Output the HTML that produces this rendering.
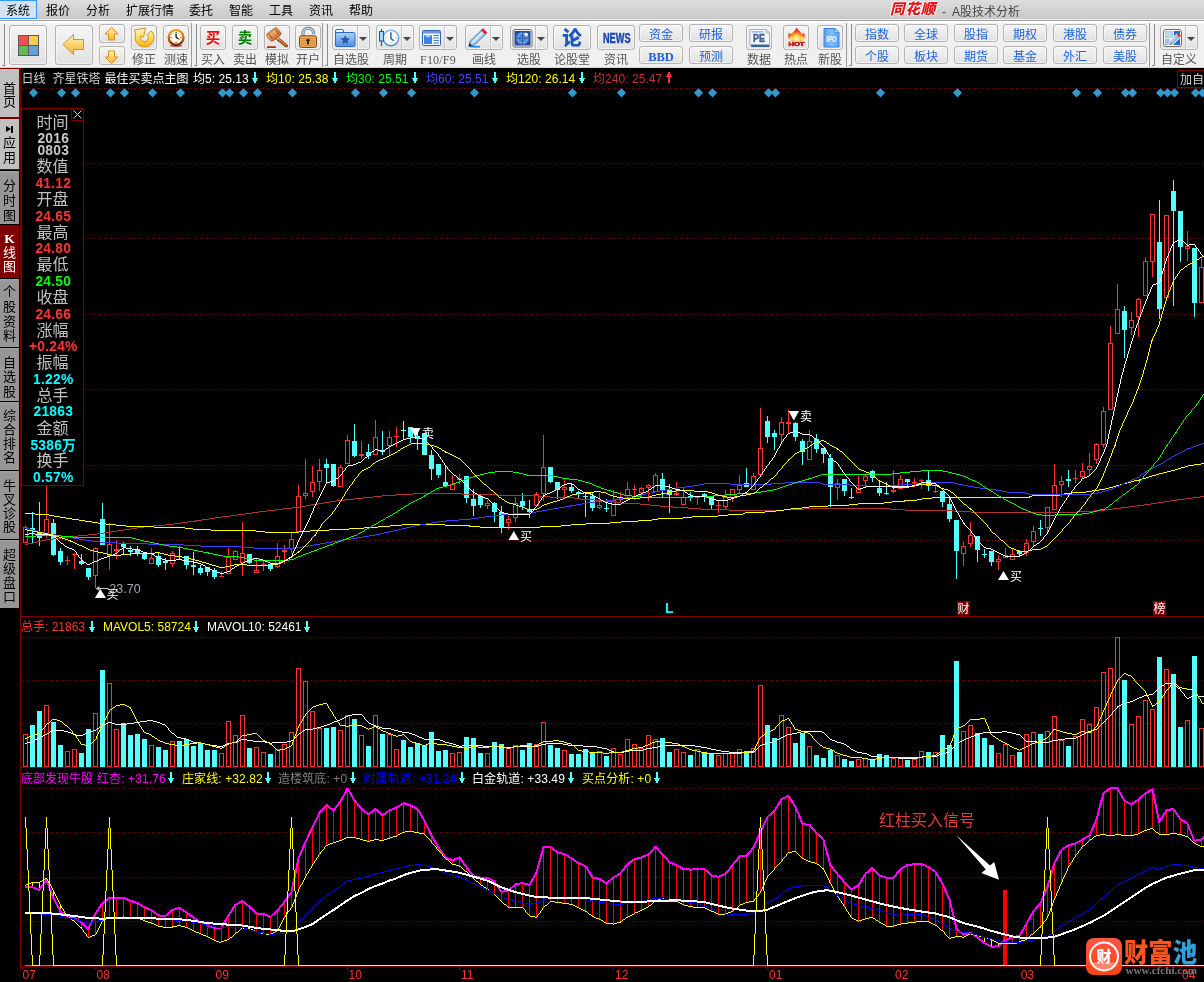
<!DOCTYPE html>
<html lang="zh-CN"><head><meta charset="utf-8"><title>同花顺 - A股技术分析</title>
<style>
*{box-sizing:border-box;margin:0;padding:0}
html,body{width:1204px;height:982px;overflow:hidden;background:#000}
body{position:relative;font-family:"Liberation Sans","Noto Sans CJK SC",sans-serif;font-size:12px;color:#000}
#chart{position:absolute;left:0;top:0;width:1204px;height:982px}
#chart,#side,#menu,#tb{will-change:transform}
#chart text{font-family:"Liberation Sans","Noto Sans CJK SC",sans-serif}
#side{position:absolute;left:0;top:68px;width:20px;height:914px;background:#000}
.tab{position:absolute;left:0;width:19px;font-size:13px;color:#000;text-align:center;word-break:break-all;overflow:hidden}
.rb{position:absolute;left:0;top:0;width:20px;height:102px;background:#800000}
.tl{background:#c0c0c0}
.td{background:linear-gradient(#a0a0a0,#969696 3px,#969696)}
.ta{background:#800000;color:#fff}
.ta b{font-family:'Liberation Serif',serif;font-weight:bold;font-size:13.5px}
.ap{position:absolute;left:6px;top:7px;width:7px;height:7px;background:linear-gradient(90deg,#000 0,#000 100%) right/2px 100% no-repeat}
.ap:before{content:"";position:absolute;left:0;top:0;border-left:5px solid #000;border-top:3.5px solid transparent;border-bottom:3.5px solid transparent}

#menu{position:absolute;left:0;top:0;width:1204px;height:21px;background:linear-gradient(#dedede 0,#c8c8c8 19px,#f0f0f0 19px,#f0f0f0 20px,#a0a0a0 20px,#a0a0a0 21px)}
#menu span{position:absolute;top:3.6px;height:14px;line-height:14px;font-size:12px;color:#000;white-space:nowrap}
#menu .hl{left:0;top:0;width:37px;height:19px;background:#d4e1f0;border:1px solid #3399ff;border-left:0}
#menu .logo{left:890px;top:1px;height:17px;line-height:17px;color:#e01414;font-weight:900;font-style:italic;font-size:14.5px;letter-spacing:0.9px;text-shadow:0 0 1px #fff,1px 0 0 #fff,-1px 0 0 #fff,0 1px 0 #fff,0 -1px 0 #fff}
#tb{position:absolute;left:0;top:21px;width:1204px;height:47px;background:linear-gradient(#fff 0,#fff 2px,#f0f0f0 2px,#f0f0f0 46px,#d4d4d4 46px);overflow:hidden}
#tb .b{position:absolute;border:1px solid #b4b4b4;border-radius:3px;background:linear-gradient(#f5f5f5,#e1e1e1);box-shadow:inset 0 0 0 1px rgba(255,255,255,.5)}
#tb .l{position:absolute;top:32px;height:14px;line-height:14px;font-size:12px;color:#555;text-align:center;white-space:nowrap}
#tb .t{position:absolute;width:44px;height:18px;border:1px solid #b4b4b4;border-radius:3px;background:linear-gradient(#f5f5f5,#e1e1e1);font-size:12px;line-height:20.5px;text-align:center;color:#1e64dc;box-shadow:inset 0 0 0 1px rgba(255,255,255,.5)}
#tb .sep{position:absolute;top:2px;width:1px;height:44px;background:#9a9a9a}
#tb .grip{position:absolute;top:3px;width:3px;height:42px;border-right:1px solid #8c8c8c;border-bottom:1px solid #8c8c8c}
#tb .dv{position:absolute;top:0;width:1px;height:100%;background:#c6c6c6;box-shadow:1px 0 0 rgba(255,255,255,.6)}
#tb .ar{position:absolute;top:10.6px;width:0;height:0;border-left:4.2px solid transparent;border-right:4.2px solid transparent;border-top:4.8px solid #464646}
#tb svg{position:absolute;left:-1px;top:0}
#tb .ch{position:absolute;left:0;top:0;width:100%;height:100%;text-align:center;font-weight:bold;font-size:17px;line-height:23px}

</style></head>
<body>
<svg id="chart" width="1204" height="982" viewBox="0 0 1204 982">
<g shape-rendering="crispEdges">
<line x1="23" y1="88.5" x2="1204" y2="88.5" stroke="#800000" stroke-width="1" stroke-dasharray="1 2"/>
<line x1="23" y1="163.5" x2="1204" y2="163.5" stroke="#800000" stroke-width="1" stroke-dasharray="1 2"/>
<line x1="23" y1="238.5" x2="1204" y2="238.5" stroke="#800000" stroke-width="1" stroke-dasharray="1 2"/>
<line x1="23" y1="314.5" x2="1204" y2="314.5" stroke="#800000" stroke-width="1" stroke-dasharray="1 2"/>
<line x1="23" y1="389.5" x2="1204" y2="389.5" stroke="#800000" stroke-width="1" stroke-dasharray="1 2"/>
<line x1="23" y1="465.5" x2="1204" y2="465.5" stroke="#800000" stroke-width="1" stroke-dasharray="1 2"/>
<line x1="23" y1="540.5" x2="1204" y2="540.5" stroke="#800000" stroke-width="1" stroke-dasharray="1 2"/>
<line x1="23" y1="637.5" x2="1204" y2="637.5" stroke="#800000" stroke-width="1" stroke-dasharray="1 2"/>
<line x1="23" y1="680.5" x2="1204" y2="680.5" stroke="#800000" stroke-width="1" stroke-dasharray="1 2"/>
<line x1="23" y1="723.5" x2="1204" y2="723.5" stroke="#800000" stroke-width="1" stroke-dasharray="1 2"/>
<line x1="23" y1="788.5" x2="1204" y2="788.5" stroke="#800000" stroke-width="1" stroke-dasharray="1 2"/>
<line x1="23" y1="832.5" x2="1204" y2="832.5" stroke="#800000" stroke-width="1" stroke-dasharray="1 2"/>
<line x1="23" y1="877.5" x2="1204" y2="877.5" stroke="#800000" stroke-width="1" stroke-dasharray="1 2"/>
<line x1="23" y1="921.5" x2="1204" y2="921.5" stroke="#800000" stroke-width="1" stroke-dasharray="1 2"/>
<rect x="20" y="68" width="1" height="902" fill="#800000"/>
<rect x="20" y="616" width="1184" height="1" fill="#800000"/>
<rect x="20" y="767" width="1184" height="1" fill="#800000"/>
<rect x="20" y="966" width="1184" height="1" fill="#800000"/>
</g>
<g fill="#3399cc">
<path d="M33.5 88.2l4.6 4.6l-4.6 4.6l-4.6-4.6z"/>
<path d="M61.5 88.2l4.6 4.6l-4.6 4.6l-4.6-4.6z"/>
<path d="M75.5 88.2l4.6 4.6l-4.6 4.6l-4.6-4.6z"/>
<path d="M110.5 88.2l4.6 4.6l-4.6 4.6l-4.6-4.6z"/>
<path d="M124.5 88.2l4.6 4.6l-4.6 4.6l-4.6-4.6z"/>
<path d="M152.5 88.2l4.6 4.6l-4.6 4.6l-4.6-4.6z"/>
<path d="M180.5 88.2l4.6 4.6l-4.6 4.6l-4.6-4.6z"/>
<path d="M222.5 88.2l4.6 4.6l-4.6 4.6l-4.6-4.6z"/>
<path d="M229.5 88.2l4.6 4.6l-4.6 4.6l-4.6-4.6z"/>
<path d="M243.5 88.2l4.6 4.6l-4.6 4.6l-4.6-4.6z"/>
<path d="M257.5 88.2l4.6 4.6l-4.6 4.6l-4.6-4.6z"/>
<path d="M292.5 88.2l4.6 4.6l-4.6 4.6l-4.6-4.6z"/>
<path d="M355.5 88.2l4.6 4.6l-4.6 4.6l-4.6-4.6z"/>
<path d="M383.5 88.2l4.6 4.6l-4.6 4.6l-4.6-4.6z"/>
<path d="M411.5 88.2l4.6 4.6l-4.6 4.6l-4.6-4.6z"/>
<path d="M474.5 88.2l4.6 4.6l-4.6 4.6l-4.6-4.6z"/>
<path d="M572.5 88.2l4.6 4.6l-4.6 4.6l-4.6-4.6z"/>
<path d="M621.5 88.2l4.6 4.6l-4.6 4.6l-4.6-4.6z"/>
<path d="M698.5 88.2l4.6 4.6l-4.6 4.6l-4.6-4.6z"/>
<path d="M712.5 88.2l4.6 4.6l-4.6 4.6l-4.6-4.6z"/>
<path d="M768.5 88.2l4.6 4.6l-4.6 4.6l-4.6-4.6z"/>
<path d="M775.5 88.2l4.6 4.6l-4.6 4.6l-4.6-4.6z"/>
<path d="M880.5 88.2l4.6 4.6l-4.6 4.6l-4.6-4.6z"/>
<path d="M957.5 88.2l4.6 4.6l-4.6 4.6l-4.6-4.6z"/>
<path d="M1076.5 88.2l4.6 4.6l-4.6 4.6l-4.6-4.6z"/>
<path d="M1097.5 88.2l4.6 4.6l-4.6 4.6l-4.6-4.6z"/>
<path d="M1125.5 88.2l4.6 4.6l-4.6 4.6l-4.6-4.6z"/>
<path d="M1132.5 88.2l4.6 4.6l-4.6 4.6l-4.6-4.6z"/>
<path d="M1160.5 88.2l4.6 4.6l-4.6 4.6l-4.6-4.6z"/>
<path d="M1167.5 88.2l4.6 4.6l-4.6 4.6l-4.6-4.6z"/>
<path d="M1174.5 88.2l4.6 4.6l-4.6 4.6l-4.6-4.6z"/>
<path d="M1195.5 88.2l4.6 4.6l-4.6 4.6l-4.6-4.6z"/>
<path d="M1202.5 88.2l4.6 4.6l-4.6 4.6l-4.6-4.6z"/>
</g>
<g shape-rendering="crispEdges">
<rect x="25" y="525" width="1" height="2" fill="#ff3232"/>
<rect x="23.5" y="527.5" width="4" height="15" fill="none" stroke="#ff3232" stroke-width="1"/>
<rect x="32" y="512" width="1" height="31" fill="#54ffff"/>
<rect x="30" y="528" width="5" height="2" fill="#54ffff"/>
<rect x="39" y="502" width="1" height="44" fill="#54ffff"/>
<rect x="37" y="532" width="5" height="6" fill="#54ffff"/>
<rect x="46" y="486" width="1" height="33" fill="#ff3232"/>
<rect x="46" y="536" width="1" height="2" fill="#ff3232"/>
<rect x="44.5" y="519.5" width="4" height="16" fill="none" stroke="#ff3232" stroke-width="1"/>
<rect x="53" y="519" width="1" height="37" fill="#54ffff"/>
<rect x="51" y="523" width="5" height="32" fill="#54ffff"/>
<rect x="60" y="548" width="1" height="17" fill="#54ffff"/>
<rect x="58" y="551" width="5" height="11" fill="#54ffff"/>
<rect x="67" y="556" width="1" height="9" fill="#ff3232"/>
<rect x="65" y="560" width="5" height="1" fill="#ff3232"/>
<rect x="74" y="553" width="1" height="16" fill="#ff3232"/>
<rect x="72" y="554" width="5" height="1" fill="#ff3232"/>
<rect x="81" y="554" width="1" height="11" fill="#54ffff"/>
<rect x="79" y="561" width="5" height="3" fill="#54ffff"/>
<rect x="88" y="568" width="1" height="12" fill="#54ffff"/>
<rect x="86" y="568" width="5" height="9" fill="#54ffff"/>
<rect x="95" y="547" width="1" height="1" fill="#ff3232"/>
<rect x="95" y="576" width="1" height="12" fill="#ff3232"/>
<rect x="93.5" y="548.5" width="4" height="27" fill="none" stroke="#ff3232" stroke-width="1"/>
<rect x="102" y="503" width="1" height="42" fill="#54ffff"/>
<rect x="100" y="519" width="5" height="26" fill="#54ffff"/>
<rect x="109" y="523" width="1" height="21" fill="#ff3232"/>
<rect x="109" y="556" width="1" height="14" fill="#ff3232"/>
<rect x="107.5" y="544.5" width="4" height="11" fill="none" stroke="#ff3232" stroke-width="1"/>
<rect x="116" y="540" width="1" height="19" fill="#ff3232"/>
<rect x="114" y="549" width="5" height="2" fill="#ff3232"/>
<rect x="123" y="542" width="1" height="13" fill="#54ffff"/>
<rect x="121" y="544" width="5" height="3" fill="#54ffff"/>
<rect x="130" y="546" width="1" height="10" fill="#54ffff"/>
<rect x="128" y="550" width="5" height="2" fill="#54ffff"/>
<rect x="137" y="546" width="1" height="10" fill="#54ffff"/>
<rect x="135" y="549" width="5" height="5" fill="#54ffff"/>
<rect x="144" y="554" width="1" height="6" fill="#54ffff"/>
<rect x="142" y="554" width="5" height="5" fill="#54ffff"/>
<rect x="151" y="548" width="1" height="10" fill="#ff3232"/>
<rect x="149.5" y="558.5" width="4" height="5" fill="none" stroke="#ff3232" stroke-width="1"/>
<rect x="158" y="553" width="1" height="14" fill="#54ffff"/>
<rect x="156" y="556" width="5" height="9" fill="#54ffff"/>
<rect x="165" y="558" width="1" height="12" fill="#54ffff"/>
<rect x="163" y="561" width="5" height="2" fill="#54ffff"/>
<rect x="172" y="551" width="1" height="2" fill="#ff3232"/>
<rect x="172" y="564" width="1" height="3" fill="#ff3232"/>
<rect x="170.5" y="553.5" width="4" height="10" fill="none" stroke="#ff3232" stroke-width="1"/>
<rect x="179" y="546" width="1" height="13" fill="#54ffff"/>
<rect x="177" y="556" width="5" height="1" fill="#54ffff"/>
<rect x="186" y="556" width="1" height="13" fill="#54ffff"/>
<rect x="184" y="556" width="5" height="9" fill="#54ffff"/>
<rect x="193" y="552" width="1" height="23" fill="#54ffff"/>
<rect x="191" y="565" width="5" height="2" fill="#54ffff"/>
<rect x="200" y="565" width="1" height="10" fill="#54ffff"/>
<rect x="198" y="568" width="5" height="5" fill="#54ffff"/>
<rect x="207" y="567" width="1" height="9" fill="#54ffff"/>
<rect x="205" y="567" width="5" height="5" fill="#54ffff"/>
<rect x="214" y="568" width="1" height="11" fill="#54ffff"/>
<rect x="212" y="570" width="5" height="7" fill="#54ffff"/>
<rect x="221" y="571" width="1" height="6" fill="#ff3232"/>
<rect x="219" y="576" width="5" height="1" fill="#ff3232"/>
<rect x="228" y="548" width="1" height="9" fill="#ff3232"/>
<rect x="226.5" y="557.5" width="4" height="16" fill="none" stroke="#ff3232" stroke-width="1"/>
<rect x="235" y="550" width="1" height="1" fill="#ff3232"/>
<rect x="233.5" y="551.5" width="4" height="8" fill="none" stroke="#ff3232" stroke-width="1"/>
<rect x="242" y="522" width="1" height="31" fill="#ff3232"/>
<rect x="242" y="563" width="1" height="13" fill="#ff3232"/>
<rect x="240.5" y="553.5" width="4" height="9" fill="none" stroke="#ff3232" stroke-width="1"/>
<rect x="249" y="554" width="1" height="10" fill="#54ffff"/>
<rect x="247" y="554" width="5" height="9" fill="#54ffff"/>
<rect x="256" y="559" width="1" height="11" fill="#ff3232"/>
<rect x="254.5" y="570.5" width="4" height="2" fill="none" stroke="#ff3232" stroke-width="1"/>
<rect x="263" y="561" width="1" height="10" fill="#ff3232"/>
<rect x="261" y="564" width="5" height="1" fill="#ff3232"/>
<rect x="270" y="563" width="1" height="8" fill="#54ffff"/>
<rect x="268" y="564" width="5" height="5" fill="#54ffff"/>
<rect x="277" y="543" width="1" height="13" fill="#ff3232"/>
<rect x="277" y="567" width="1" height="1" fill="#ff3232"/>
<rect x="275.5" y="556.5" width="4" height="10" fill="none" stroke="#ff3232" stroke-width="1"/>
<rect x="284" y="545" width="1" height="19" fill="#ff3232"/>
<rect x="282" y="550" width="5" height="2" fill="#ff3232"/>
<rect x="291" y="533" width="1" height="6" fill="#ff3232"/>
<rect x="291" y="549" width="1" height="4" fill="#ff3232"/>
<rect x="289.5" y="539.5" width="4" height="9" fill="none" stroke="#ff3232" stroke-width="1"/>
<rect x="298" y="485" width="1" height="11" fill="#ff3232"/>
<rect x="296.5" y="496.5" width="4" height="35" fill="none" stroke="#ff3232" stroke-width="1"/>
<rect x="305" y="459" width="1" height="34" fill="#ff3232"/>
<rect x="305" y="496" width="1" height="3" fill="#ff3232"/>
<rect x="303.5" y="493.5" width="4" height="2" fill="none" stroke="#ff3232" stroke-width="1"/>
<rect x="312" y="466" width="1" height="16" fill="#ff3232"/>
<rect x="312" y="492" width="1" height="5" fill="#ff3232"/>
<rect x="310.5" y="482.5" width="4" height="9" fill="none" stroke="#ff3232" stroke-width="1"/>
<rect x="319" y="459" width="1" height="11" fill="#ff3232"/>
<rect x="319" y="482" width="1" height="9" fill="#ff3232"/>
<rect x="317.5" y="470.5" width="4" height="11" fill="none" stroke="#ff3232" stroke-width="1"/>
<rect x="326" y="459" width="1" height="23" fill="#54ffff"/>
<rect x="324" y="464" width="5" height="4" fill="#54ffff"/>
<rect x="333" y="464" width="1" height="23" fill="#54ffff"/>
<rect x="331" y="464" width="5" height="22" fill="#54ffff"/>
<rect x="340" y="465" width="1" height="2" fill="#ff3232"/>
<rect x="338.5" y="467.5" width="4" height="19" fill="none" stroke="#ff3232" stroke-width="1"/>
<rect x="347" y="435" width="1" height="5" fill="#ff3232"/>
<rect x="345.5" y="440.5" width="4" height="23" fill="none" stroke="#ff3232" stroke-width="1"/>
<rect x="354" y="424" width="1" height="33" fill="#54ffff"/>
<rect x="352" y="441" width="5" height="15" fill="#54ffff"/>
<rect x="361" y="441" width="1" height="18" fill="#ff3232"/>
<rect x="359" y="454" width="5" height="2" fill="#ff3232"/>
<rect x="368" y="444" width="1" height="15" fill="#54ffff"/>
<rect x="366" y="452" width="5" height="4" fill="#54ffff"/>
<rect x="375" y="420" width="1" height="17" fill="#ff3232"/>
<rect x="373.5" y="437.5" width="4" height="17" fill="none" stroke="#ff3232" stroke-width="1"/>
<rect x="382" y="431" width="1" height="24" fill="#54ffff"/>
<rect x="380" y="450" width="5" height="2" fill="#54ffff"/>
<rect x="389" y="431" width="1" height="6" fill="#ff3232"/>
<rect x="389" y="446" width="1" height="9" fill="#ff3232"/>
<rect x="387.5" y="437.5" width="4" height="8" fill="none" stroke="#ff3232" stroke-width="1"/>
<rect x="396" y="427" width="1" height="20" fill="#ff3232"/>
<rect x="394" y="436" width="5" height="1" fill="#ff3232"/>
<rect x="403" y="421" width="1" height="19" fill="#54ffff"/>
<rect x="401" y="430" width="5" height="1" fill="#54ffff"/>
<rect x="410" y="427" width="1" height="16" fill="#54ffff"/>
<rect x="408" y="427" width="5" height="10" fill="#54ffff"/>
<rect x="417" y="429" width="1" height="21" fill="#54ffff"/>
<rect x="415" y="436" width="5" height="3" fill="#54ffff"/>
<rect x="424" y="433" width="1" height="22" fill="#54ffff"/>
<rect x="422" y="433" width="5" height="22" fill="#54ffff"/>
<rect x="431" y="450" width="1" height="30" fill="#54ffff"/>
<rect x="429" y="455" width="5" height="14" fill="#54ffff"/>
<rect x="438" y="464" width="1" height="14" fill="#54ffff"/>
<rect x="436" y="464" width="5" height="11" fill="#54ffff"/>
<rect x="445" y="466" width="1" height="21" fill="#54ffff"/>
<rect x="443" y="482" width="5" height="4" fill="#54ffff"/>
<rect x="452" y="475" width="1" height="9" fill="#ff3232"/>
<rect x="450.5" y="484.5" width="4" height="5" fill="none" stroke="#ff3232" stroke-width="1"/>
<rect x="459" y="474" width="1" height="10" fill="#ff3232"/>
<rect x="457" y="478" width="5" height="2" fill="#ff3232"/>
<rect x="466" y="476" width="1" height="27" fill="#54ffff"/>
<rect x="464" y="476" width="5" height="22" fill="#54ffff"/>
<rect x="473" y="489" width="1" height="27" fill="#54ffff"/>
<rect x="471" y="499" width="5" height="7" fill="#54ffff"/>
<rect x="480" y="495" width="1" height="13" fill="#54ffff"/>
<rect x="478" y="496" width="5" height="9" fill="#54ffff"/>
<rect x="487" y="500" width="1" height="3" fill="#ff3232"/>
<rect x="487" y="506" width="1" height="3" fill="#ff3232"/>
<rect x="485.5" y="503.5" width="4" height="2" fill="none" stroke="#ff3232" stroke-width="1"/>
<rect x="494" y="502" width="1" height="20" fill="#54ffff"/>
<rect x="492" y="503" width="5" height="9" fill="#54ffff"/>
<rect x="501" y="506" width="1" height="27" fill="#54ffff"/>
<rect x="499" y="512" width="5" height="16" fill="#54ffff"/>
<rect x="508" y="516" width="1" height="3" fill="#ff3232"/>
<rect x="508" y="523" width="1" height="7" fill="#ff3232"/>
<rect x="506.5" y="519.5" width="4" height="3" fill="none" stroke="#ff3232" stroke-width="1"/>
<rect x="515" y="497" width="1" height="6" fill="#ff3232"/>
<rect x="515" y="518" width="1" height="4" fill="#ff3232"/>
<rect x="513.5" y="503.5" width="4" height="14" fill="none" stroke="#ff3232" stroke-width="1"/>
<rect x="522" y="493" width="1" height="17" fill="#54ffff"/>
<rect x="520" y="501" width="5" height="5" fill="#54ffff"/>
<rect x="529" y="500" width="1" height="18" fill="#54ffff"/>
<rect x="527" y="510" width="5" height="2" fill="#54ffff"/>
<rect x="536" y="492" width="1" height="2" fill="#ff3232"/>
<rect x="534.5" y="494.5" width="4" height="11" fill="none" stroke="#ff3232" stroke-width="1"/>
<rect x="543" y="435" width="1" height="32" fill="#ff3232"/>
<rect x="543" y="494" width="1" height="7" fill="#ff3232"/>
<rect x="541.5" y="467.5" width="4" height="26" fill="none" stroke="#ff3232" stroke-width="1"/>
<rect x="550" y="467" width="1" height="16" fill="#54ffff"/>
<rect x="548" y="467" width="5" height="15" fill="#54ffff"/>
<rect x="557" y="482" width="1" height="17" fill="#54ffff"/>
<rect x="555" y="482" width="5" height="8" fill="#54ffff"/>
<rect x="564" y="479" width="1" height="8" fill="#ff3232"/>
<rect x="564" y="490" width="1" height="7" fill="#ff3232"/>
<rect x="562.5" y="487.5" width="4" height="2" fill="none" stroke="#ff3232" stroke-width="1"/>
<rect x="571" y="484" width="1" height="9" fill="#54ffff"/>
<rect x="569" y="487" width="5" height="4" fill="#54ffff"/>
<rect x="578" y="491" width="1" height="7" fill="#54ffff"/>
<rect x="576" y="492" width="5" height="2" fill="#54ffff"/>
<rect x="585" y="493" width="1" height="24" fill="#54ffff"/>
<rect x="583" y="496" width="5" height="1" fill="#54ffff"/>
<rect x="592" y="493" width="1" height="18" fill="#54ffff"/>
<rect x="590" y="496" width="5" height="12" fill="#54ffff"/>
<rect x="599" y="493" width="1" height="12" fill="#ff3232"/>
<rect x="599" y="508" width="1" height="1" fill="#ff3232"/>
<rect x="597.5" y="505.5" width="4" height="2" fill="none" stroke="#ff3232" stroke-width="1"/>
<rect x="606" y="499" width="1" height="13" fill="#54ffff"/>
<rect x="604" y="508" width="5" height="1" fill="#54ffff"/>
<rect x="613" y="490" width="1" height="10" fill="#ff3232"/>
<rect x="611.5" y="500.5" width="4" height="15" fill="none" stroke="#ff3232" stroke-width="1"/>
<rect x="620" y="492" width="1" height="11" fill="#ff3232"/>
<rect x="618" y="499" width="5" height="1" fill="#ff3232"/>
<rect x="627" y="482" width="1" height="7" fill="#ff3232"/>
<rect x="627" y="496" width="1" height="2" fill="#ff3232"/>
<rect x="625.5" y="489.5" width="4" height="6" fill="none" stroke="#ff3232" stroke-width="1"/>
<rect x="634" y="485" width="1" height="15" fill="#ff3232"/>
<rect x="632" y="489" width="5" height="1" fill="#ff3232"/>
<rect x="641" y="487" width="1" height="1" fill="#ff3232"/>
<rect x="641" y="493" width="1" height="4" fill="#ff3232"/>
<rect x="639.5" y="488.5" width="4" height="4" fill="none" stroke="#ff3232" stroke-width="1"/>
<rect x="648" y="484" width="1" height="1" fill="#ff3232"/>
<rect x="648" y="488" width="1" height="13" fill="#ff3232"/>
<rect x="646.5" y="485.5" width="4" height="2" fill="none" stroke="#ff3232" stroke-width="1"/>
<rect x="655" y="473" width="1" height="2" fill="#ff3232"/>
<rect x="653.5" y="475.5" width="4" height="16" fill="none" stroke="#ff3232" stroke-width="1"/>
<rect x="662" y="473" width="1" height="24" fill="#54ffff"/>
<rect x="660" y="479" width="5" height="11" fill="#54ffff"/>
<rect x="669" y="484" width="1" height="29" fill="#54ffff"/>
<rect x="667" y="489" width="5" height="6" fill="#54ffff"/>
<rect x="676" y="482" width="1" height="14" fill="#ff3232"/>
<rect x="674" y="493" width="5" height="2" fill="#ff3232"/>
<rect x="683" y="488" width="1" height="9" fill="#ff3232"/>
<rect x="681.5" y="497.5" width="4" height="7" fill="none" stroke="#ff3232" stroke-width="1"/>
<rect x="690" y="492" width="1" height="9" fill="#54ffff"/>
<rect x="688" y="496" width="5" height="1" fill="#54ffff"/>
<rect x="697" y="497" width="1" height="8" fill="#ff3232"/>
<rect x="695" y="497" width="5" height="1" fill="#ff3232"/>
<rect x="704" y="493" width="1" height="9" fill="#54ffff"/>
<rect x="702" y="494" width="5" height="2" fill="#54ffff"/>
<rect x="711" y="496" width="1" height="13" fill="#54ffff"/>
<rect x="709" y="496" width="5" height="9" fill="#54ffff"/>
<rect x="718" y="500" width="1" height="13" fill="#ff3232"/>
<rect x="716" y="505" width="5" height="1" fill="#ff3232"/>
<rect x="725" y="490" width="1" height="7" fill="#ff3232"/>
<rect x="725" y="507" width="1" height="2" fill="#ff3232"/>
<rect x="723.5" y="497.5" width="4" height="9" fill="none" stroke="#ff3232" stroke-width="1"/>
<rect x="732" y="498" width="1" height="4" fill="#ff3232"/>
<rect x="730.5" y="489.5" width="4" height="8" fill="none" stroke="#ff3232" stroke-width="1"/>
<rect x="739" y="475" width="1" height="10" fill="#ff3232"/>
<rect x="739" y="490" width="1" height="4" fill="#ff3232"/>
<rect x="737.5" y="485.5" width="4" height="4" fill="none" stroke="#ff3232" stroke-width="1"/>
<rect x="746" y="468" width="1" height="19" fill="#54ffff"/>
<rect x="744" y="483" width="5" height="4" fill="#54ffff"/>
<rect x="753" y="473" width="1" height="3" fill="#ff3232"/>
<rect x="751.5" y="476.5" width="4" height="13" fill="none" stroke="#ff3232" stroke-width="1"/>
<rect x="760" y="408" width="1" height="40" fill="#ff3232"/>
<rect x="758.5" y="448.5" width="4" height="26" fill="none" stroke="#ff3232" stroke-width="1"/>
<rect x="767" y="416" width="1" height="27" fill="#54ffff"/>
<rect x="765" y="421" width="5" height="16" fill="#54ffff"/>
<rect x="774" y="430" width="1" height="20" fill="#54ffff"/>
<rect x="772" y="433" width="5" height="4" fill="#54ffff"/>
<rect x="781" y="417" width="1" height="5" fill="#ff3232"/>
<rect x="781" y="435" width="1" height="7" fill="#ff3232"/>
<rect x="779.5" y="422.5" width="4" height="12" fill="none" stroke="#ff3232" stroke-width="1"/>
<rect x="788" y="410" width="1" height="24" fill="#ff3232"/>
<rect x="786" y="422" width="5" height="2" fill="#ff3232"/>
<rect x="795" y="422" width="1" height="19" fill="#54ffff"/>
<rect x="793" y="423" width="5" height="14" fill="#54ffff"/>
<rect x="802" y="439" width="1" height="26" fill="#54ffff"/>
<rect x="800" y="441" width="5" height="11" fill="#54ffff"/>
<rect x="809" y="430" width="1" height="11" fill="#ff3232"/>
<rect x="807.5" y="441.5" width="4" height="18" fill="none" stroke="#ff3232" stroke-width="1"/>
<rect x="816" y="434" width="1" height="19" fill="#54ffff"/>
<rect x="814" y="439" width="5" height="10" fill="#54ffff"/>
<rect x="823" y="448" width="1" height="15" fill="#54ffff"/>
<rect x="821" y="448" width="5" height="6" fill="#54ffff"/>
<rect x="830" y="454" width="1" height="53" fill="#54ffff"/>
<rect x="828" y="458" width="5" height="29" fill="#54ffff"/>
<rect x="837" y="479" width="1" height="4" fill="#ff3232"/>
<rect x="837" y="488" width="1" height="12" fill="#ff3232"/>
<rect x="835.5" y="483.5" width="4" height="4" fill="none" stroke="#ff3232" stroke-width="1"/>
<rect x="844" y="479" width="1" height="17" fill="#54ffff"/>
<rect x="842" y="479" width="5" height="12" fill="#54ffff"/>
<rect x="851" y="488" width="1" height="11" fill="#54ffff"/>
<rect x="849" y="497" width="5" height="1" fill="#54ffff"/>
<rect x="858" y="476" width="1" height="12" fill="#ff3232"/>
<rect x="856.5" y="488.5" width="4" height="4" fill="none" stroke="#ff3232" stroke-width="1"/>
<rect x="865" y="475" width="1" height="1" fill="#ff3232"/>
<rect x="865" y="481" width="1" height="6" fill="#ff3232"/>
<rect x="863.5" y="476.5" width="4" height="4" fill="none" stroke="#ff3232" stroke-width="1"/>
<rect x="872" y="470" width="1" height="12" fill="#54ffff"/>
<rect x="870" y="471" width="5" height="7" fill="#54ffff"/>
<rect x="879" y="482" width="1" height="14" fill="#54ffff"/>
<rect x="877" y="488" width="5" height="5" fill="#54ffff"/>
<rect x="886" y="482" width="1" height="13" fill="#54ffff"/>
<rect x="884" y="493" width="5" height="1" fill="#54ffff"/>
<rect x="893" y="470" width="1" height="23" fill="#ff3232"/>
<rect x="891" y="490" width="5" height="2" fill="#ff3232"/>
<rect x="900" y="475" width="1" height="4" fill="#ff3232"/>
<rect x="898.5" y="479.5" width="4" height="9" fill="none" stroke="#ff3232" stroke-width="1"/>
<rect x="907" y="479" width="1" height="7" fill="#54ffff"/>
<rect x="905" y="479" width="5" height="3" fill="#54ffff"/>
<rect x="914" y="478" width="1" height="9" fill="#ff3232"/>
<rect x="912" y="482" width="5" height="1" fill="#ff3232"/>
<rect x="921" y="479" width="1" height="10" fill="#ff3232"/>
<rect x="919" y="480" width="5" height="1" fill="#ff3232"/>
<rect x="928" y="471" width="1" height="20" fill="#54ffff"/>
<rect x="926" y="480" width="5" height="6" fill="#54ffff"/>
<rect x="935" y="483" width="1" height="10" fill="#ff3232"/>
<rect x="933" y="491" width="5" height="1" fill="#ff3232"/>
<rect x="942" y="491" width="1" height="16" fill="#54ffff"/>
<rect x="940" y="491" width="5" height="11" fill="#54ffff"/>
<rect x="949" y="498" width="1" height="24" fill="#54ffff"/>
<rect x="947" y="504" width="5" height="15" fill="#54ffff"/>
<rect x="956" y="520" width="1" height="59" fill="#54ffff"/>
<rect x="954" y="520" width="5" height="31" fill="#54ffff"/>
<rect x="963" y="542" width="1" height="4" fill="#ff3232"/>
<rect x="963" y="554" width="1" height="12" fill="#ff3232"/>
<rect x="961.5" y="546.5" width="4" height="7" fill="none" stroke="#ff3232" stroke-width="1"/>
<rect x="970" y="522" width="1" height="13" fill="#ff3232"/>
<rect x="970" y="544" width="1" height="3" fill="#ff3232"/>
<rect x="968.5" y="535.5" width="4" height="8" fill="none" stroke="#ff3232" stroke-width="1"/>
<rect x="977" y="536" width="1" height="26" fill="#54ffff"/>
<rect x="975" y="536" width="5" height="14" fill="#54ffff"/>
<rect x="984" y="549" width="1" height="9" fill="#54ffff"/>
<rect x="982" y="554" width="5" height="1" fill="#54ffff"/>
<rect x="991" y="551" width="1" height="15" fill="#54ffff"/>
<rect x="989" y="551" width="5" height="11" fill="#54ffff"/>
<rect x="998" y="555" width="1" height="4" fill="#ff3232"/>
<rect x="998" y="562" width="1" height="8" fill="#ff3232"/>
<rect x="996.5" y="559.5" width="4" height="2" fill="none" stroke="#ff3232" stroke-width="1"/>
<rect x="1005" y="548" width="1" height="7" fill="#ff3232"/>
<rect x="1003.5" y="555.5" width="4" height="2" fill="none" stroke="#ff3232" stroke-width="1"/>
<rect x="1012" y="549" width="1" height="5" fill="#ff3232"/>
<rect x="1010.5" y="554.5" width="4" height="5" fill="none" stroke="#ff3232" stroke-width="1"/>
<rect x="1019" y="550" width="1" height="6" fill="#54ffff"/>
<rect x="1017" y="551" width="5" height="3" fill="#54ffff"/>
<rect x="1026" y="539" width="1" height="4" fill="#ff3232"/>
<rect x="1026" y="553" width="1" height="3" fill="#ff3232"/>
<rect x="1024.5" y="543.5" width="4" height="9" fill="none" stroke="#ff3232" stroke-width="1"/>
<rect x="1033" y="526" width="1" height="5" fill="#ff3232"/>
<rect x="1033" y="542" width="1" height="5" fill="#ff3232"/>
<rect x="1031.5" y="531.5" width="4" height="10" fill="none" stroke="#ff3232" stroke-width="1"/>
<rect x="1040" y="520" width="1" height="16" fill="#54ffff"/>
<rect x="1038" y="528" width="5" height="1" fill="#54ffff"/>
<rect x="1047" y="528" width="1" height="4" fill="#ff3232"/>
<rect x="1045.5" y="507.5" width="4" height="20" fill="none" stroke="#ff3232" stroke-width="1"/>
<rect x="1054" y="464" width="1" height="21" fill="#ff3232"/>
<rect x="1052.5" y="485.5" width="4" height="24" fill="none" stroke="#ff3232" stroke-width="1"/>
<rect x="1061" y="476" width="1" height="5" fill="#ff3232"/>
<rect x="1061" y="485" width="1" height="12" fill="#ff3232"/>
<rect x="1059.5" y="481.5" width="4" height="3" fill="none" stroke="#ff3232" stroke-width="1"/>
<rect x="1068" y="470" width="1" height="17" fill="#54ffff"/>
<rect x="1066" y="479" width="5" height="2" fill="#54ffff"/>
<rect x="1075" y="470" width="1" height="13" fill="#ff3232"/>
<rect x="1073" y="478" width="5" height="1" fill="#ff3232"/>
<rect x="1082" y="463" width="1" height="8" fill="#ff3232"/>
<rect x="1082" y="477" width="1" height="2" fill="#ff3232"/>
<rect x="1080.5" y="471.5" width="4" height="5" fill="none" stroke="#ff3232" stroke-width="1"/>
<rect x="1089" y="453" width="1" height="13" fill="#ff3232"/>
<rect x="1089" y="470" width="1" height="5" fill="#ff3232"/>
<rect x="1087.5" y="466.5" width="4" height="3" fill="none" stroke="#ff3232" stroke-width="1"/>
<rect x="1096" y="443" width="1" height="1" fill="#ff3232"/>
<rect x="1096" y="460" width="1" height="4" fill="#ff3232"/>
<rect x="1094.5" y="444.5" width="4" height="15" fill="none" stroke="#ff3232" stroke-width="1"/>
<rect x="1103" y="407" width="1" height="4" fill="#ff3232"/>
<rect x="1103" y="445" width="1" height="3" fill="#ff3232"/>
<rect x="1101.5" y="411.5" width="4" height="33" fill="none" stroke="#ff3232" stroke-width="1"/>
<rect x="1110" y="326" width="1" height="17" fill="#ff3232"/>
<rect x="1108.5" y="343.5" width="4" height="66" fill="none" stroke="#ff3232" stroke-width="1"/>
<rect x="1117" y="284" width="1" height="25" fill="#ff3232"/>
<rect x="1115.5" y="309.5" width="4" height="24" fill="none" stroke="#ff3232" stroke-width="1"/>
<rect x="1124" y="306" width="1" height="52" fill="#54ffff"/>
<rect x="1122" y="311" width="5" height="19" fill="#54ffff"/>
<rect x="1131" y="312" width="1" height="8" fill="#ff3232"/>
<rect x="1131" y="328" width="1" height="7" fill="#ff3232"/>
<rect x="1129.5" y="320.5" width="4" height="7" fill="none" stroke="#ff3232" stroke-width="1"/>
<rect x="1138" y="298" width="1" height="1" fill="#ff3232"/>
<rect x="1138" y="317" width="1" height="20" fill="#ff3232"/>
<rect x="1136.5" y="299.5" width="4" height="17" fill="none" stroke="#ff3232" stroke-width="1"/>
<rect x="1145" y="257" width="1" height="4" fill="#ff3232"/>
<rect x="1143.5" y="261.5" width="4" height="34" fill="none" stroke="#ff3232" stroke-width="1"/>
<rect x="1152" y="262" width="1" height="15" fill="#ff3232"/>
<rect x="1150.5" y="214.5" width="4" height="47" fill="none" stroke="#ff3232" stroke-width="1"/>
<rect x="1159" y="200" width="1" height="119" fill="#54ffff"/>
<rect x="1157" y="242" width="5" height="67" fill="#54ffff"/>
<rect x="1166" y="298" width="1" height="2" fill="#ff3232"/>
<rect x="1164.5" y="215.5" width="4" height="82" fill="none" stroke="#ff3232" stroke-width="1"/>
<rect x="1173" y="180" width="1" height="126" fill="#54ffff"/>
<rect x="1171" y="191" width="5" height="20" fill="#54ffff"/>
<rect x="1180" y="211" width="1" height="51" fill="#54ffff"/>
<rect x="1178" y="211" width="5" height="36" fill="#54ffff"/>
<rect x="1187" y="231" width="1" height="15" fill="#ff3232"/>
<rect x="1187" y="249" width="1" height="12" fill="#ff3232"/>
<rect x="1185.5" y="246.5" width="4" height="2" fill="none" stroke="#ff3232" stroke-width="1"/>
<rect x="1194" y="248" width="1" height="69" fill="#54ffff"/>
<rect x="1192" y="248" width="5" height="55" fill="#54ffff"/>
<rect x="1201" y="258" width="1" height="9" fill="#ff3232"/>
<rect x="1199.5" y="267.5" width="4" height="35" fill="none" stroke="#ff3232" stroke-width="1"/>
</g>
<g stroke-linejoin="round" shape-rendering="crispEdges">
<path d="M25 544.5h3M28 543.5h5M33 542.5h4M37 541.5h4M41 540.5h5M46 539.5h7M53 538.5h8M61 537.5h7M68 536.5h10M78 535.5h10M88 534.5h9M97 533.5h7M104 532.5h7M111 531.5h6M117 530.5h7M124 529.5h7M131 528.5h6M137 527.5h7M144 526.5h9M153 525.5h12M165 524.5h9M174 523.5h7M181 522.5h7M188 521.5h8M195 520.5h7M202 519.5h7M209 518.5h6M215 517.5h7M222 516.5h8M230 515.5h7M237 514.5h8M245 513.5h7M252 512.5h7M259 511.5h8M267 510.5h8M275 509.5h8M283 508.5h9M292 507.5h8M300 506.5h6M306 505.5h5M311 504.5h7M318 503.5h6M324 502.5h6M330 501.5h6M336 500.5h9M345 499.5h9M354 498.5h9M363 497.5h10M373 496.5h9M382 495.5h14M396 494.5h17M413 493.5h49M462 494.5h36M498 495.5h41M539 496.5h11M550 497.5h24M574 498.5h6M580 499.5h14M594 500.5h10M604 501.5h9M613 502.5h8M621 503.5h19M640 504.5h10M650 505.5h10M660 506.5h13M673 507.5h15M688 508.5h13M701 509.5h28M729 510.5h55M784 509.5h20M804 508.5h86M890 509.5h15M905 510.5h49M954 511.5h17M971 512.5h106M1077 511.5h17M1094 510.5h11M1105 509.5h8M1113 508.5h8M1121 507.5h8M1129 506.5h8M1137 505.5h7M1144 504.5h7M1151 503.5h6M1157 502.5h7M1164 501.5h6M1170 500.5h7M1177 499.5h8M1185 498.5h8M1193 497.5h7M1200 496.5h4" fill="none" stroke="#b43232" stroke-width="1" shape-rendering="crispEdges"/>
<path d="M25 513.5h10M35 514.5h14M49 515.5h5M54 516.5h6M60 517.5h6M66 518.5h6M72 519.5h7M79 520.5h6M85 521.5h7M92 522.5h6M98 523.5h8M106 524.5h10M116 525.5h10M126 526.5h28M154 527.5h31M185 528.5h8M193 529.5h18M211 530.5h45M256 531.5h9M265 532.5h34M299 531.5h11M310 530.5h19M329 529.5h20M349 528.5h15M364 527.5h14M378 526.5h12M390 525.5h12M402 524.5h43M445 525.5h25M469 526.5h11M480 527.5h60M540 526.5h21M561 525.5h10M571 524.5h15M586 523.5h24M610 522.5h11M621 521.5h17M638 520.5h14M652 519.5h6M658 518.5h25M683 517.5h9M692 516.5h26M718 515.5h10M728 514.5h15M743 513.5h2M745 512.5h20M765 511.5h11M776 510.5h8M784 509.5h7M791 508.5h11M802 507.5h7M809 506.5h19M828 505.5h21M849 504.5h9M858 503.5h26M884 502.5h8M892 501.5h13M904 500.5h13M917 499.5h5M922 498.5h10M932 497.5h98M1029 496.5h3M1032 495.5h28M1060 494.5h4M1064 493.5h8M1072 492.5h14M1086 491.5h6M1092 490.5h7M1099 489.5h6M1105 488.5h4M1109 487.5h4M1113 486.5h3M1116 485.5h4M1120 484.5h3M1123 483.5h4M1127 482.5h4M1131 481.5h3M1134 480.5h6M1139 479.5h3M1142 478.5h4M1146 477.5h3M1149 476.5h3M1152 475.5h4M1156 474.5h3M1159 473.5h4M1163 472.5h4M1167 471.5h4M1171 470.5h4M1175 469.5h3M1178 468.5h3M1181 467.5h4M1185 466.5h3M1188 465.5h6M1194 464.5h7M1201 463.5h3" fill="none" stroke="#ffff00" stroke-width="1" shape-rendering="crispEdges"/>
<path d="M25 527.5h1M26 528.5h3M29 529.5h4M33 530.5h3M36 531.5h4M39 532.5h6M45 533.5h5M50 534.5h6M56 535.5h6M62 536.5h5M67 537.5h6M73 538.5h6M79 539.5h6M85 540.5h7M92 541.5h8M100 542.5h18M118 543.5h30M148 544.5h36M184 545.5h17M201 546.5h40M241 547.5h13M254 548.5h42M296 547.5h6M302 546.5h6M308 545.5h6M314 544.5h6M320 543.5h6M326 542.5h6M332 541.5h6M338 540.5h6M344 539.5h7M351 538.5h6M357 537.5h6M363 536.5h6M369 535.5h6M375 534.5h5M380 533.5h4M384 532.5h5M389 531.5h4M393 530.5h5M398 529.5h4M402 528.5h4M406 527.5h5M411 526.5h4M415 525.5h5M420 524.5h6M426 523.5h6M432 522.5h6M438 521.5h8M446 520.5h13M459 519.5h12M471 518.5h7M478 517.5h7M485 516.5h8M493 515.5h8M501 514.5h12M513 513.5h18M531 512.5h5M536 511.5h6M542 510.5h5M547 509.5h6M553 508.5h6M559 507.5h6M565 506.5h6M570 505.5h6M576 504.5h6M582 503.5h5M587 502.5h9M596 501.5h10M606 500.5h7M613 499.5h6M619 498.5h6M625 497.5h6M631 496.5h5M636 495.5h6M642 494.5h4M646 493.5h5M651 492.5h4M655 491.5h5M660 490.5h5M665 489.5h7M672 488.5h6M678 487.5h8M686 486.5h7M693 485.5h6M699 484.5h5M704 483.5h26M730 484.5h41M771 483.5h14M785 482.5h35M820 483.5h3M823 484.5h27M850 485.5h17M867 486.5h23M890 485.5h10M900 484.5h12M912 483.5h13M925 482.5h29M954 483.5h4M958 484.5h5M963 485.5h5M968 486.5h6M974 487.5h6M980 488.5h8M988 489.5h8M996 490.5h6M1002 491.5h5M1007 492.5h18M1025 493.5h4M1029 494.5h61M1090 493.5h8M1098 492.5h4M1102 491.5h3M1105 490.5h4M1109 489.5h3M1112 488.5h2M1114 487.5h2M1116 486.5h3M1119 485.5h2M1121 484.5h2M1123 483.5h2M1125 482.5h3M1128 481.5h2M1130 480.5h2M1132 479.5h3M1135 478.5h2M1137 477.5h2M1139 476.5h1M1140 475.5h1M1141 474.5h2M1143 473.5h1M1144 472.5h2M1145 471.5h2M1147 470.5h2M1149 469.5h2M1151 468.5h2M1153 467.5h2M1155 466.5h2M1157 465.5h2M1159 464.5h2M1161 463.5h2M1163 462.5h1M1164 461.5h2M1166 460.5h1M1167 459.5h2M1169 458.5h2M1171 457.5h1M1172 456.5h2M1174 455.5h2M1176 454.5h2M1178 453.5h2M1180 452.5h2M1182 451.5h2M1184 450.5h2M1186 449.5h2M1187 448.5h4M1191 447.5h2M1193 446.5h3M1196 445.5h3M1199 444.5h3M1202 443.5h2" fill="none" stroke="#3c3cff" stroke-width="1" shape-rendering="crispEdges"/>
<path d="M25 536.5h11M36 535.5h25M61 536.5h12M73 537.5h59M132 538.5h4M136 539.5h4M140 540.5h4M144 541.5h5M149 542.5h5M154 543.5h5M159 544.5h5M164 545.5h5M169 546.5h8M177 547.5h6M183 548.5h5M188 549.5h5M193 550.5h5M198 551.5h5M203 552.5h6M208 553.5h5M213 554.5h5M218 555.5h5M223 556.5h16M239 557.5h6M245 558.5h4M249 559.5h5M254 560.5h35M289 559.5h5M294 558.5h2M296 557.5h2M298 556.5h3M301 555.5h2M303 554.5h3M306 553.5h3M309 552.5h2M311 551.5h3M314 550.5h3M317 549.5h2M319 548.5h3M322 547.5h3M325 546.5h2M327 545.5h3M330 544.5h3M333 543.5h2M335 542.5h3M338 541.5h3M341 540.5h2M343 539.5h3M346 538.5h3M349 537.5h2M351 536.5h3M354 535.5h3M357 534.5h1M358 533.5h2M360 532.5h2M362 531.5h2M364 530.5h1M365 529.5h2M367 528.5h2M369 527.5h2M371 526.5h1M372 525.5h2M374 524.5h2M376 523.5h2M378 522.5h1M379 521.5h2M381 520.5h2M383 519.5h2M385 518.5h1M386 517.5h2M388 516.5h2M390 515.5h2M392 514.5h1M393 513.5h2M395 512.5h2M397 511.5h1M398 510.5h2M400 509.5h1M401 508.5h2M403 507.5h1M404 506.5h2M406 505.5h2M408 504.5h1M409 503.5h2M411 502.5h2M413 501.5h2M415 500.5h2M417 499.5h2M419 498.5h2M421 497.5h2M423 496.5h2M424 495.5h2M426 494.5h2M428 493.5h2M430 492.5h1M431 491.5h2M433 490.5h2M435 489.5h1M436 488.5h3M439 487.5h4M443 486.5h4M447 485.5h4M451 484.5h2M453 483.5h3M456 482.5h3M459 481.5h2M461 480.5h3M464 479.5h3M467 478.5h3M470 477.5h3M473 476.5h3M476 475.5h4M480 474.5h4M484 473.5h4M488 472.5h7M495 471.5h18M513 472.5h6M519 473.5h4M523 474.5h4M527 475.5h26M553 476.5h5M558 477.5h4M562 478.5h7M569 479.5h9M578 480.5h4M582 481.5h3M585 482.5h4M589 483.5h3M592 484.5h2M594 485.5h2M596 486.5h3M599 487.5h2M601 488.5h3M604 489.5h3M607 490.5h4M611 491.5h3M614 492.5h4M618 493.5h3M621 494.5h3M624 495.5h8M632 496.5h9M640 497.5h53M693 496.5h20M713 495.5h12M725 494.5h12M737 493.5h18M755 492.5h6M761 491.5h6M767 490.5h6M773 489.5h4M777 488.5h3M780 487.5h3M783 486.5h3M786 485.5h3M789 484.5h3M792 483.5h3M795 482.5h3M798 481.5h4M802 480.5h3M805 479.5h4M808 478.5h4M812 477.5h3M815 476.5h3M818 475.5h3M821 474.5h49M870 475.5h1M871 474.5h21M892 473.5h8M900 472.5h10M910 471.5h11M921 470.5h22M943 471.5h5M948 472.5h4M952 473.5h4M956 474.5h4M960 475.5h3M963 476.5h3M966 477.5h2M968 478.5h2M970 479.5h2M972 480.5h3M975 481.5h2M977 482.5h2M979 483.5h1M980 484.5h2M982 485.5h1M983 486.5h2M985 487.5h1M986 488.5h2M988 489.5h1M989 490.5h2M991 491.5h2M993 492.5h1M994 493.5h2M996 494.5h1M997 495.5h2M999 496.5h2M1001 497.5h2M1003 498.5h1M1004 499.5h2M1006 500.5h2M1008 501.5h2M1010 502.5h2M1012 503.5h2M1014 504.5h2M1016 505.5h1M1017 506.5h2M1019 507.5h2M1021 508.5h2M1023 509.5h3M1026 510.5h2M1028 511.5h3M1031 512.5h2M1033 513.5h3M1036 514.5h6M1042 515.5h13M1055 514.5h27M1082 513.5h7M1089 512.5h4M1093 511.5h4M1097 510.5h3M1100 509.5h5M1105 508.5h1M1106 507.5h2M1108 506.5h1M1109 505.5h1M1110 504.5h2M1112 503.5h1M1113 502.5h1M1114 501.5h1M1115 500.5h2M1117 499.5h1M1118 498.5h1M1119 497.5h2M1121 496.5h1M1122 495.5h1M1123 494.5h2M1125 493.5h1M1126 492.5h1M1127 491.5h2M1129 490.5h1M1130 489.5h1M1131 488.5h2M1133 487.5h1M1134 486.5h1M1135 485.5h2M1137 484.5h1M1138 483.5h1M1139.5 481v2M1140 480.5h1M1141 479.5h1M1142 478.5h1M1143.5 476v2M1144 475.5h1M1145 474.5h1M1146 473.5h1M1147 472.5h1M1148.5 470v2M1149 469.5h1M1150 468.5h1M1151 467.5h1M1152 466.5h1M1153.5 464v2M1154 463.5h1M1155 462.5h1M1156 461.5h1M1157 460.5h1M1158.5 458v2M1159 457.5h1M1160.5 455v2M1161 454.5h1M1162.5 452v2M1163.5 450v2M1164 449.5h1M1165.5 447v2M1166.5 445v2M1167.5 444v2M1168 443.5h1M1169.5 441v2M1170 440.5h1M1171.5 438v2M1172 437.5h1M1173.5 435v2M1174 434.5h1M1175.5 432v2M1176.5 431v2M1177.5 429v2M1178 428.5h1M1179.5 426v2M1180 425.5h1M1181.5 423v2M1182 422.5h1M1183.5 420v2M1184 419.5h1M1185.5 417v2M1186 416.5h1M1187 415.5h1M1188 414.5h1M1189 413.5h1M1190 412.5h1M1191.5 410v2M1192 409.5h1M1193 408.5h1M1194 407.5h1M1195 406.5h1M1196.5 404v2M1197 403.5h1M1198.5 401v2M1199 400.5h1M1200.5 398v2M1201 397.5h1M1202.5 395v2M1203 394.5h1" fill="none" stroke="#00ff00" stroke-width="1" shape-rendering="crispEdges"/>
<path d="M25 529.5h2M27 530.5h5M32 531.5h6M38 532.5h5M43 533.5h5M48 534.5h5M53 535.5h3M56 536.5h3M59 537.5h3M62 538.5h3M65 539.5h3M68 540.5h3M70 541.5h3M73 542.5h2M75 543.5h2M77 544.5h2M79 545.5h3M82 546.5h2M84 547.5h2M86 548.5h2M88 549.5h2M90 550.5h4M94 551.5h4M98 552.5h5M103 553.5h4M107 554.5h4M111 555.5h10M121 554.5h9M130 553.5h25M155 552.5h5M160 553.5h4M164 554.5h4M168 555.5h7M175 556.5h7M182 557.5h6M188 558.5h3M191 559.5h4M195 560.5h4M199 561.5h3M202 562.5h4M206 563.5h3M209 564.5h3M212 565.5h4M216 566.5h3M219 567.5h6M225 566.5h5M230 565.5h4M234 564.5h13M247 565.5h25M272 564.5h3M275 563.5h4M279 562.5h2M281 561.5h3M284 560.5h2M286 559.5h2M288 558.5h2M290 557.5h2M292 556.5h1M293 555.5h1M294 554.5h2M296 553.5h1M297 552.5h2M298 551.5h2M300 550.5h1M301 549.5h1M302 548.5h1M303 547.5h1M304 546.5h1M305 545.5h1M306 544.5h1M307 543.5h1M308 542.5h1M309 541.5h1M310 540.5h1M311.5 538v2M312 537.5h1M313 536.5h1M314 535.5h2M315 534.5h1M316.5 532v2M317 531.5h1M318.5 529v2M319 528.5h1M320.5 526v2M321.5 524v2M322 523.5h1M323 522.5h1M324 521.5h1M325 520.5h1M326 519.5h1M327 518.5h1M328 517.5h1M329 516.5h1M330 515.5h1M331 514.5h1M332.5 512v2M333 511.5h1M334 510.5h1M335.5 508v2M336 507.5h1M337.5 505v2M338 504.5h1M339.5 502v2M340 501.5h1M341.5 499v2M342.5 497v2M343 496.5h1M344.5 494v2M345.5 492v2M346 491.5h1M347.5 489v2M348 488.5h1M349.5 486v2M350 485.5h1M351 484.5h1M352.5 482v2M353 481.5h1M354.5 479v2M355 478.5h1M356 477.5h1M357 476.5h1M358.5 474v2M359 473.5h1M360 472.5h1M361 471.5h1M362 470.5h2M364 469.5h2M366 468.5h2M368 467.5h2M370 466.5h1M371 465.5h1M372 464.5h1M373 463.5h2M375 462.5h1M376 461.5h2M378 460.5h2M380 459.5h3M383 458.5h2M385 457.5h2M387 456.5h2M389 455.5h2M391 454.5h2M393 453.5h2M395 452.5h2M397 451.5h1M398 450.5h2M400 449.5h1M401 448.5h2M403 447.5h2M405 446.5h2M407 445.5h2M409 444.5h2M411 443.5h15M426 444.5h4M430 445.5h4M434 446.5h3M437 447.5h2M439 448.5h2M441 449.5h1M442 450.5h2M444 451.5h2M445 452.5h3M448 453.5h2M450 454.5h2M452 455.5h2M454 456.5h2M456 457.5h2M458 458.5h2M460 459.5h1M461 460.5h1M462 461.5h1M463 462.5h1M464 463.5h1M465 464.5h1M466 465.5h1M467 466.5h1M468 467.5h1M469 468.5h1M470 469.5h1M471.5 470v2M472 472.5h1M473 473.5h1M474 474.5h1M475 475.5h1M476 476.5h1M477 477.5h1M478 478.5h1M479 479.5h1M480 480.5h1M481 481.5h1M482 482.5h1M483 483.5h1M484 484.5h2M486 485.5h1M487 486.5h1M488 487.5h1M489 488.5h1M490 489.5h1M491 490.5h2M493 491.5h1M494 492.5h1M495 493.5h1M496 494.5h1M497 495.5h1M498 496.5h1M499 497.5h2M501 498.5h1M502 499.5h2M504 500.5h1M505 501.5h2M507 502.5h2M509 503.5h4M513 504.5h3M516 505.5h3M519 506.5h3M522 507.5h3M525 508.5h2M527 509.5h10M537 508.5h2M539 507.5h2M541 506.5h1M542 505.5h2M544 504.5h3M547 503.5h3M550 502.5h3M553 501.5h4M557 500.5h3M560 499.5h3M563 498.5h2M565 497.5h2M567 496.5h3M570 495.5h2M572 494.5h5M577 493.5h7M584 492.5h10M594 491.5h7M601 492.5h5M606 493.5h2M608 494.5h2M610 495.5h3M613 496.5h4M617 497.5h6M623 498.5h17M640 497.5h9M649 496.5h3M652 495.5h4M656 494.5h5M661 493.5h7M668 492.5h4M672 491.5h4M676 490.5h18M694 491.5h14M708 492.5h4M712 493.5h3M715 494.5h3M718 495.5h4M722 496.5h5M727 497.5h8M735 496.5h5M740 495.5h6M746 494.5h5M751 493.5h3M754 492.5h2M756 491.5h1M757 490.5h1M758 489.5h1M759 488.5h1M760 487.5h2M762 486.5h1M763 485.5h1M764 484.5h1M765 483.5h2M767 482.5h1M768 481.5h1M769 480.5h1M770 479.5h1M771 478.5h2M773 477.5h1M774 476.5h1M775 475.5h1M776 474.5h1M777.5 472v2M778 471.5h1M779 470.5h1M780 469.5h1M781 468.5h1M782.5 466v2M783 465.5h1M784 464.5h1M785 463.5h1M786 462.5h1M787 461.5h1M788.5 459v2M789 459.5h1M790 458.5h1M791 457.5h1M792 456.5h1M793 455.5h1M794 454.5h1M795 453.5h2M797 452.5h2M799 451.5h3M802 450.5h2M804 449.5h1M805 448.5h2M807 447.5h2M809 446.5h1M810 445.5h2M812 444.5h1M813 443.5h2M815 442.5h2M817 441.5h4M821 440.5h3M824 441.5h2M826 442.5h1M827 443.5h2M829 444.5h1M830 445.5h2M832 446.5h2M834 447.5h2M836 448.5h2M837 449.5h2M839 450.5h1M840 451.5h2M842 452.5h1M843 453.5h1M844 454.5h1M845 455.5h1M846 456.5h1M847 457.5h1M848 458.5h1M849 459.5h1M850 460.5h1M851 461.5h1M852 462.5h1M853 463.5h1M854 464.5h1M855 465.5h1M856 466.5h1M857 467.5h1M858 468.5h1M859 469.5h2M861 470.5h3M864 471.5h2M866 472.5h3M869 473.5h2M871 474.5h1M872 475.5h1M873 476.5h2M875 477.5h1M876 478.5h1M877 479.5h1M878 480.5h2M879 481.5h3M882 482.5h2M884 483.5h2M886 484.5h2M888 485.5h2M890 486.5h2M892 487.5h2M893 488.5h1M894 487.5h15M909 486.5h5M914 485.5h5M919 484.5h13M932 485.5h5M937 486.5h2M939 487.5h2M941 488.5h3M944 489.5h4M948 490.5h2M950 491.5h1M951 492.5h2M953 493.5h1M954 494.5h1M955 495.5h1M956 496.5h1M957 497.5h1M958 498.5h1M959 499.5h1M960 500.5h1M961 501.5h1M962 502.5h1M963 503.5h1M964 504.5h2M966 505.5h1M967 506.5h1M968 507.5h1M969 508.5h2M970 509.5h2M972 510.5h1M973 511.5h1M974 512.5h1M975 513.5h1M976 514.5h1M977 515.5h1M978 516.5h1M979 517.5h1M980 518.5h1M981 519.5h1M982 520.5h1M983 521.5h1M984 522.5h1M985 523.5h1M986 524.5h1M987.5 525v2M988 527.5h1M989 528.5h1M990.5 529v2M991 531.5h1M992 532.5h1M993 533.5h2M995 534.5h1M996 535.5h1M997 536.5h1M998 537.5h1M999 538.5h1M1000 539.5h1M1001 540.5h2M1003 541.5h1M1004 542.5h1M1005 543.5h1M1006 544.5h1M1007 545.5h1M1008 546.5h1M1009 547.5h2M1011 548.5h3M1014 549.5h2M1016 550.5h3M1019 551.5h9M1028 550.5h4M1032 549.5h9M1041 548.5h2M1043 547.5h2M1045 546.5h2M1047 545.5h1M1048 544.5h1M1049 543.5h1M1050 542.5h1M1051 541.5h1M1052 540.5h1M1053 539.5h1M1054 538.5h1M1055 537.5h1M1056 536.5h1M1057 535.5h1M1058 534.5h1M1059 533.5h1M1060 532.5h1M1061 531.5h1M1062.5 529v2M1063 528.5h1M1064 527.5h1M1065 526.5h1M1066 525.5h1M1067 524.5h1M1068 523.5h1M1069 522.5h1M1070.5 520v2M1071 519.5h1M1072 518.5h1M1073.5 516v2M1074 515.5h1M1075 514.5h1M1076 513.5h1M1077 512.5h1M1078 511.5h1M1079 510.5h1M1080 509.5h1M1081.5 507v2M1082 506.5h1M1083 505.5h1M1084 504.5h1M1085.5 502v2M1086 501.5h1M1087.5 499v2M1088 498.5h1M1089 497.5h1M1090.5 495v2M1091 494.5h1M1092 493.5h1M1093 492.5h1M1094.5 490v2M1095 489.5h1M1096 488.5h1M1097.5 486v2M1098.5 484v2M1099.5 482v2M1100.5 480v2M1101.5 478v2M1102.5 476v2M1103.5 473v3M1104.5 471v2M1105.5 468v3M1106.5 466v2M1107.5 463v3M1108.5 461v2M1109.5 458v3M1110.5 456v2M1111.5 453v3M1112.5 450v3M1113.5 448v2M1114.5 445v3M1115.5 442v4M1116.5 439v3M1117.5 436v3M1118.5 433v3M1119.5 430v3M1120.5 428v2M1121.5 426v2M1122.5 423v3M1123.5 421v2M1124.5 419v2M1125.5 417v2M1126.5 415v2M1127.5 412v3M1128.5 410v2M1129.5 408v2M1130.5 406v2M1131.5 404v2M1132.5 402v2M1133.5 399v3M1134.5 396v3M1135.5 394v2M1136.5 391v3M1137.5 389v2M1138.5 386v3M1139.5 383v3M1140.5 380v3M1141.5 377v3M1142.5 374v3M1143.5 370v4M1144.5 367v3M1145.5 363v4M1146.5 360v3M1147.5 356v4M1148.5 352v4M1149.5 348v4M1150.5 344v4M1151.5 340v4M1152.5 338v3M1153.5 336v2M1154.5 334v2M1155.5 332v2M1156.5 329v3M1157.5 327v2M1158.5 325v2M1159.5 321v4M1160.5 318v3M1161.5 314v4M1162.5 311v3M1163.5 307v4M1164.5 304v3M1165.5 301v3M1166.5 297v4M1167.5 295v2M1168.5 292v3M1169.5 290v2M1170.5 287v3M1171.5 285v2M1172.5 282v3M1173.5 280v2M1174 279.5h1M1175.5 277v2M1176 276.5h1M1177.5 274v2M1178 273.5h1M1179.5 271v2M1180 270.5h1M1181 269.5h2M1183 268.5h1M1184 267.5h1M1185 266.5h2M1187 265.5h1M1188 264.5h2M1190 263.5h2M1192 262.5h2M1194 261.5h2M1196 260.5h1M1197 259.5h2M1199 258.5h1M1200 257.5h2M1202 256.5h2" fill="none" stroke="#ffff00" stroke-width="1" shape-rendering="crispEdges"/>
<path d="M25 534.5h4M29 533.5h6M35 534.5h14M49 535.5h5M54 536.5h1M55 537.5h1M56 538.5h1M57 539.5h1M58 540.5h1M59 541.5h1M60 542.5h1M61 543.5h2M63 544.5h1M64 545.5h1M65 546.5h2M67 547.5h2M69 548.5h3M72 549.5h2M74 550.5h1M75 551.5h1M76.5 552v2M77 554.5h1M78.5 555v2M79 557.5h1M80 558.5h1M81.5 559v2M82 560.5h1M83 561.5h1M84 562.5h2M86 563.5h1M87 564.5h3M90 563.5h2M92 562.5h2M94 561.5h3M97 560.5h2M99 559.5h2M101 558.5h3M104 557.5h3M107 556.5h3M110 555.5h3M113 554.5h2M115 553.5h2M117 552.5h1M118 551.5h1M119 550.5h1M120 549.5h2M122 548.5h1M123 547.5h3M126 548.5h6M132 549.5h6M138 550.5h3M141 551.5h2M143 552.5h4M147 553.5h5M152 554.5h2M154 555.5h1M155 556.5h2M157 557.5h2M159 558.5h3M162 559.5h3M165 560.5h11M176 559.5h6M182 560.5h5M187 561.5h6M193 562.5h5M198 563.5h3M201 564.5h2M203 565.5h2M205 566.5h1M206 567.5h2M208 568.5h2M210 569.5h2M212 570.5h2M214 571.5h3M217 572.5h3M220 573.5h4M224 572.5h3M227 571.5h3M230 570.5h1M231 569.5h1M232 568.5h2M234 567.5h1M235 566.5h2M237 565.5h2M239 564.5h2M241 563.5h2M243 562.5h2M245 561.5h2M247 560.5h2M249 559.5h4M253 558.5h6M259 559.5h4M263 560.5h2M265 561.5h3M268 562.5h2M270 563.5h5M275 564.5h3M278 563.5h3M281 562.5h2M283 561.5h2M285 560.5h2M287 559.5h1M288 558.5h1M289 557.5h2M291 556.5h1M292.5 553v3M293.5 551v2M294.5 549v2M295.5 547v2M296.5 545v2M297.5 542v3M298.5 540v2M299.5 538v2M300.5 536v2M301.5 534v2M302.5 532v2M303.5 530v2M304.5 528v2M305.5 526v2M306.5 524v2M307.5 522v2M308.5 520v2M309.5 518v2M310.5 515v3M311.5 513v2M312.5 511v2M313.5 508v3M314.5 506v2M315.5 504v2M316.5 502v2M317.5 500v2M318.5 498v2M319.5 496v2M320.5 494v2M321.5 492v2M322.5 490v2M323.5 488v2M324.5 486v2M325.5 484v2M326.5 482v2M327 482.5h3M330 481.5h4M334 480.5h1M335 479.5h1M336 478.5h2M338 477.5h1M339 476.5h1M340 475.5h1M341 474.5h1M342.5 472v2M343 471.5h1M344 470.5h1M345.5 468v2M346 467.5h1M347 466.5h1M348 465.5h5M353 464.5h3M356 463.5h2M358 462.5h3M361 461.5h1M362 460.5h1M363 459.5h1M364 458.5h1M365 457.5h2M367 456.5h1M368 455.5h1M369 454.5h1M370 453.5h1M371 452.5h1M372 451.5h2M374 450.5h1M375 449.5h3M378 450.5h3M381 451.5h2M383 450.5h2M385 449.5h1M386 448.5h2M388 447.5h1M389 446.5h2M391 445.5h2M393 444.5h2M395 443.5h2M397 442.5h2M399 441.5h2M401 440.5h2M403 439.5h3M406 438.5h4M410 437.5h9M419 438.5h3M422 439.5h3M425 440.5h1M426 441.5h1M427 442.5h1M428 443.5h1M429 444.5h1M430 445.5h1M431 446.5h1M432.5 447v2M433 449.5h1M434 450.5h1M435 451.5h1M436 452.5h1M437 453.5h1M438.5 454v2M439 456.5h1M440.5 457v2M441 459.5h1M442.5 460v2M443 462.5h1M444.5 463v2M445 465.5h1M446 466.5h1M447.5 467v2M448 469.5h1M449 470.5h1M450 471.5h1M451 472.5h1M452 473.5h1M453 474.5h1M454 475.5h2M456 476.5h1M457 477.5h1M458 478.5h1M459 479.5h2M461 480.5h1M462 481.5h1M463 482.5h1M464 483.5h1M465 484.5h2M467 485.5h1M468.5 486v2M469 488.5h1M470 489.5h1M471 490.5h1M472 491.5h1M473 492.5h2M475 493.5h2M477 494.5h1M478 495.5h2M480 496.5h3M483 497.5h2M485 498.5h3M488 499.5h1M489 500.5h1M490 501.5h1M491 502.5h1M492 503.5h1M493 504.5h1M494 505.5h1M495 506.5h1M496 507.5h1M497 508.5h1M498 509.5h1M499 510.5h1M500 511.5h1M501 512.5h3M504 513.5h4M508 514.5h22M530 513.5h1M531 512.5h1M532 511.5h1M533.5 509v2M534 508.5h1M535 507.5h1M536 506.5h1M537.5 504v2M538 503.5h1M539.5 501v2M540 500.5h1M541.5 498v2M542 497.5h1M543.5 495v2M544 495.5h1M545 494.5h2M547 493.5h3M550 492.5h2M552 491.5h2M554 490.5h2M556 489.5h2M558 488.5h2M560 487.5h1M561 486.5h1M562 485.5h2M564 484.5h3M567 483.5h5M572 484.5h2M574 485.5h1M575 486.5h1M576 487.5h1M577 488.5h1M578 489.5h2M580 490.5h2M582 491.5h1M583 492.5h2M585 493.5h6M590 494.5h2M592 495.5h2M594 496.5h2M596 497.5h2M598 498.5h2M600 499.5h1M601 500.5h2M603 501.5h2M605 502.5h3M608 503.5h4M612 504.5h9M621 503.5h1M622 502.5h2M624 501.5h2M626 500.5h2M628 499.5h2M630 498.5h2M632 497.5h1M633 496.5h3M636 495.5h2M638 494.5h3M641 493.5h2M643 492.5h3M646 491.5h2M648 490.5h1M649 489.5h2M651 488.5h1M652 487.5h2M654 486.5h1M655 485.5h10M665 486.5h4M669 487.5h3M672 488.5h3M675 489.5h5M680 490.5h4M684 491.5h1M685 492.5h2M687 493.5h1M688 494.5h2M690 495.5h3M693 496.5h13M706 497.5h3M709 498.5h3M712 499.5h4M716 500.5h12M728 499.5h3M731 498.5h3M734 497.5h3M737 496.5h3M740 495.5h2M742 494.5h1M743 493.5h2M745 492.5h2M747 491.5h1M748 490.5h1M749 489.5h1M750 488.5h1M751 487.5h1M752 486.5h1M753 485.5h1M754.5 483v2M755 482.5h1M756 481.5h1M757.5 479v2M758 478.5h1M759 477.5h1M760.5 475v2M761 474.5h1M762.5 472v2M763 471.5h1M764.5 469v2M765 468.5h1M766.5 466v2M767 465.5h1M768 464.5h1M769.5 462v2M770 461.5h1M771 460.5h1M772.5 458v2M773 457.5h1M774.5 455v2M775.5 453v2M776.5 451v2M777.5 449v2M778 448.5h1M779.5 446v2M780.5 444v2M781.5 442v2M782 441.5h1M783.5 439v2M784 438.5h1M785 437.5h1M786.5 435v2M787 434.5h1M788 433.5h2M790 432.5h3M793 431.5h4M797 432.5h3M800 433.5h2M802 434.5h8M810 435.5h2M812 436.5h1M813 437.5h1M814 438.5h2M816 439.5h1M817 440.5h1M818 441.5h1M819 442.5h1M820 443.5h1M821 444.5h1M822 445.5h1M823 446.5h1M824.5 447v2M825 449.5h1M826.5 450v2M827.5 452v2M828 454.5h1M829.5 455v2M830 457.5h1M831 458.5h1M832 459.5h1M833 460.5h1M834 461.5h2M836 462.5h1M837 463.5h1M838.5 464v2M839 466.5h1M840.5 467v2M841 469.5h1M842.5 470v2M843 472.5h1M844 473.5h1M845.5 474v2M846 476.5h1M847 477.5h1M848 478.5h1M849.5 479v2M850 481.5h1M851 482.5h1M852 483.5h1M853 484.5h1M854 485.5h1M855 486.5h1M856 487.5h1M857 488.5h1M858 489.5h2M860 488.5h3M863 487.5h3M866 486.5h46M912 485.5h4M916 484.5h3M919 483.5h2M921 482.5h10M931 483.5h5M936 484.5h1M937 485.5h2M939 486.5h1M940 487.5h1M941 488.5h1M942 489.5h1M943 490.5h1M944 491.5h1M945 492.5h1M946 493.5h1M947 494.5h1M948 495.5h1M949.5 496v2M950.5 498v2M951.5 500v2M952.5 502v2M953.5 504v2M954.5 506v2M955.5 508v2M956.5 510v2M957 512.5h1M958.5 513v2M959.5 515v2M960.5 517v2M961 519.5h1M962.5 520v2M963.5 522v2M964.5 523v2M965 525.5h1M966 526.5h1M967 527.5h1M968 528.5h1M969 529.5h1M970 530.5h1M971.5 531v2M972 533.5h1M973 534.5h1M974.5 535v2M975 537.5h1M976 538.5h1M977.5 539v2M978 541.5h1M979 542.5h1M980 543.5h1M981 544.5h1M982 545.5h1M983 546.5h1M984 547.5h2M986 548.5h5M991 549.5h2M993 550.5h2M995 551.5h2M997 552.5h2M999 553.5h2M1001 554.5h2M1003 555.5h2M1005 556.5h15M1020 555.5h2M1022 554.5h2M1024 553.5h2M1026 552.5h1M1027 551.5h1M1028 550.5h2M1030 549.5h1M1031 548.5h1M1032 547.5h1M1033 546.5h1M1034 545.5h2M1036 544.5h1M1037 543.5h2M1039 542.5h1M1040 541.5h1M1041 540.5h1M1042 539.5h1M1043.5 537v2M1044 536.5h1M1045 535.5h1M1046 534.5h1M1047.5 532v2M1048.5 530v2M1049.5 528v2M1050.5 526v2M1051.5 524v2M1052.5 522v2M1053.5 520v2M1054.5 518v2M1055.5 516v2M1056 515.5h1M1057.5 513v2M1058.5 511v2M1059.5 509v2M1060.5 507v2M1061 506.5h1M1062.5 504v2M1063 503.5h1M1064.5 501v2M1065 500.5h1M1066.5 498v2M1067 497.5h1M1068.5 495v2M1069 494.5h1M1070 493.5h1M1071.5 491v2M1072 490.5h1M1073 489.5h1M1074.5 487v2M1075 486.5h1M1076 485.5h1M1077 484.5h1M1078 483.5h1M1079 482.5h1M1080 481.5h1M1081.5 479v2M1082 478.5h2M1084 477.5h3M1087 476.5h2M1089 475.5h1M1090 474.5h1M1091 473.5h1M1092 472.5h1M1093 471.5h1M1094 470.5h1M1095 469.5h1M1096.5 467v2M1097.5 465v2M1098.5 463v2M1099.5 461v2M1100.5 458v3M1101.5 456v2M1102.5 454v2M1103.5 452v2M1104.5 449v3M1105.5 447v2M1106.5 444v3M1107.5 439v5M1108.5 434v5M1109.5 430v4M1110.5 425v5M1111.5 420v5M1112.5 416v4M1113.5 411v5M1114.5 407v4M1115.5 402v5M1116.5 397v5M1117.5 393v4M1118.5 388v5M1119.5 384v4M1120.5 379v5M1121.5 375v4M1122.5 372v3M1123.5 368v4M1124.5 364v4M1125.5 361v3M1126.5 358v3M1127.5 354v4M1128.5 351v3M1129.5 348v3M1130.5 344v4M1131.5 341v3M1132.5 338v3M1133.5 335v3M1134.5 331v4M1135.5 328v3M1136.5 325v3M1137.5 323v2M1138.5 320v3M1139.5 317v3M1140.5 314v3M1141.5 312v2M1142.5 309v3M1143.5 306v3M1144.5 304v2M1145.5 301v3M1146.5 299v2M1147.5 296v3M1148.5 294v2M1149.5 292v2M1150.5 289v3M1151.5 287v2M1152.5 285v2M1153 284.5h3M1156 283.5h2M1158 282.5h2M1159 281.5h1M1160.5 278v3M1161.5 274v4M1162.5 271v3M1163.5 268v3M1164.5 264v4M1165.5 261v3M1166.5 258v3M1167.5 256v2M1168.5 253v3M1169.5 251v2M1170.5 248v3M1171.5 246v2M1172.5 244v2M1173.5 242v2M1174 242.5h1M1175 241.5h2M1177 240.5h2M1179 239.5h2M1181 240.5h2M1183 241.5h1M1184 242.5h1M1185 243.5h1M1186 244.5h1M1187 245.5h2M1189 244.5h6M1195.5 245v2M1196 247.5h1M1197 248.5h1M1198.5 249v2M1199 251.5h1M1200.5 252v2M1201 254.5h1M1202 255.5h1M1203 256.5h1" fill="none" stroke="#ffffff" stroke-width="1" shape-rendering="crispEdges"/>
</g>
<path d="M95.500 588.500l4-2.500v2h9v1h-9v2z" fill="#c0c0c0"/>
<text x="109.3" y="593" fill="#a4acb6" font-size="12.5" >23.70</text>
<path d="M100.4 589L106 598L94.8 598z" fill="#fff"/>
<text x="106.5" y="599.3" fill="#fff" font-size="12" >买</text>
<path d="M410.5 428L420.5 428L415.5 437.5z" fill="#fff"/>
<text x="422" y="438" fill="#fff" font-size="12" >卖</text>
<path d="M513.8 531L519 540L508.5 540z" fill="#fff"/>
<text x="520" y="541" fill="#fff" font-size="12" >买</text>
<path d="M788.5 411L799 411L793.8 420.5z" fill="#fff"/>
<text x="800" y="421" fill="#fff" font-size="12" >卖</text>
<path d="M1003.5 571L1009 580L998 580z" fill="#fff"/>
<text x="1010" y="581" fill="#fff" font-size="12" >买</text>
<text x="665" y="613.3" fill="#00ffff" font-size="14" font-weight="bold">L</text>
<rect x="957" y="601" width="13" height="14" fill="#800000"/>
<text x="957.5" y="612.5" fill="#fff" font-size="12" >财</text>
<rect x="1153" y="601" width="13" height="14" fill="#800000"/>
<text x="1153.5" y="612.5" fill="#fff" font-size="12" >榜</text>
<g shape-rendering="crispEdges">
<rect x="23.5" y="734.5" width="4" height="32" fill="none" stroke="#ff3232" stroke-width="1"/>
<rect x="30" y="725" width="5" height="42" fill="#54ffff"/>
<rect x="37" y="711" width="5" height="56" fill="#54ffff"/>
<rect x="44.5" y="705.5" width="4" height="61" fill="none" stroke="#ff3232" stroke-width="1"/>
<rect x="51" y="722" width="5" height="45" fill="#54ffff"/>
<rect x="58" y="745" width="5" height="22" fill="#54ffff"/>
<rect x="65.5" y="751.5" width="4" height="15" fill="none" stroke="#ff3232" stroke-width="1"/>
<rect x="72.5" y="749.5" width="4" height="17" fill="none" stroke="#ff3232" stroke-width="1"/>
<rect x="79" y="753" width="5" height="14" fill="#54ffff"/>
<rect x="86" y="729" width="5" height="38" fill="#54ffff"/>
<rect x="93.5" y="713.5" width="4" height="53" fill="none" stroke="#ff3232" stroke-width="1"/>
<rect x="100" y="670" width="5" height="97" fill="#54ffff"/>
<rect x="107.5" y="683.5" width="4" height="83" fill="none" stroke="#ff3232" stroke-width="1"/>
<rect x="114.5" y="729.5" width="4" height="37" fill="none" stroke="#ff3232" stroke-width="1"/>
<rect x="121" y="723" width="5" height="44" fill="#54ffff"/>
<rect x="128" y="735" width="5" height="32" fill="#54ffff"/>
<rect x="135" y="734" width="5" height="33" fill="#54ffff"/>
<rect x="142" y="739" width="5" height="28" fill="#54ffff"/>
<rect x="149.5" y="745.5" width="4" height="21" fill="none" stroke="#ff3232" stroke-width="1"/>
<rect x="156" y="747" width="5" height="20" fill="#54ffff"/>
<rect x="163" y="750" width="5" height="17" fill="#54ffff"/>
<rect x="170.5" y="741.5" width="4" height="25" fill="none" stroke="#ff3232" stroke-width="1"/>
<rect x="177" y="741" width="5" height="26" fill="#54ffff"/>
<rect x="184" y="739" width="5" height="28" fill="#54ffff"/>
<rect x="191" y="746" width="5" height="21" fill="#54ffff"/>
<rect x="198" y="743" width="5" height="24" fill="#54ffff"/>
<rect x="205" y="750" width="5" height="17" fill="#54ffff"/>
<rect x="212" y="750" width="5" height="17" fill="#54ffff"/>
<rect x="219.5" y="753.5" width="4" height="13" fill="none" stroke="#ff3232" stroke-width="1"/>
<rect x="226.5" y="721.5" width="4" height="45" fill="none" stroke="#ff3232" stroke-width="1"/>
<rect x="233.5" y="735.5" width="4" height="31" fill="none" stroke="#ff3232" stroke-width="1"/>
<rect x="240.5" y="715.5" width="4" height="51" fill="none" stroke="#ff3232" stroke-width="1"/>
<rect x="247" y="748" width="5" height="19" fill="#54ffff"/>
<rect x="254.5" y="747.5" width="4" height="19" fill="none" stroke="#ff3232" stroke-width="1"/>
<rect x="261.5" y="752.5" width="4" height="14" fill="none" stroke="#ff3232" stroke-width="1"/>
<rect x="268" y="754" width="5" height="13" fill="#54ffff"/>
<rect x="275.5" y="749.5" width="4" height="17" fill="none" stroke="#ff3232" stroke-width="1"/>
<rect x="282.5" y="744.5" width="4" height="22" fill="none" stroke="#ff3232" stroke-width="1"/>
<rect x="289.5" y="732.5" width="4" height="34" fill="none" stroke="#ff3232" stroke-width="1"/>
<rect x="296.5" y="668.5" width="4" height="98" fill="none" stroke="#ff3232" stroke-width="1"/>
<rect x="303.5" y="681.5" width="4" height="85" fill="none" stroke="#ff3232" stroke-width="1"/>
<rect x="310.5" y="711.5" width="4" height="55" fill="none" stroke="#ff3232" stroke-width="1"/>
<rect x="317.5" y="728.5" width="4" height="38" fill="none" stroke="#ff3232" stroke-width="1"/>
<rect x="324" y="728" width="5" height="39" fill="#54ffff"/>
<rect x="331" y="727" width="5" height="40" fill="#54ffff"/>
<rect x="338.5" y="730.5" width="4" height="36" fill="none" stroke="#ff3232" stroke-width="1"/>
<rect x="345.5" y="715.5" width="4" height="51" fill="none" stroke="#ff3232" stroke-width="1"/>
<rect x="352" y="719" width="5" height="48" fill="#54ffff"/>
<rect x="359.5" y="735.5" width="4" height="31" fill="none" stroke="#ff3232" stroke-width="1"/>
<rect x="366" y="746" width="5" height="21" fill="#54ffff"/>
<rect x="373.5" y="715.5" width="4" height="51" fill="none" stroke="#ff3232" stroke-width="1"/>
<rect x="380" y="734" width="5" height="33" fill="#54ffff"/>
<rect x="387.5" y="734.5" width="4" height="32" fill="none" stroke="#ff3232" stroke-width="1"/>
<rect x="394.5" y="749.5" width="4" height="17" fill="none" stroke="#ff3232" stroke-width="1"/>
<rect x="401" y="740" width="5" height="27" fill="#54ffff"/>
<rect x="408" y="747" width="5" height="20" fill="#54ffff"/>
<rect x="415" y="743" width="5" height="24" fill="#54ffff"/>
<rect x="422" y="745" width="5" height="22" fill="#54ffff"/>
<rect x="429" y="732" width="5" height="35" fill="#54ffff"/>
<rect x="436" y="751" width="5" height="16" fill="#54ffff"/>
<rect x="443" y="750" width="5" height="17" fill="#54ffff"/>
<rect x="450.5" y="753.5" width="4" height="13" fill="none" stroke="#ff3232" stroke-width="1"/>
<rect x="457.5" y="752.5" width="4" height="14" fill="none" stroke="#ff3232" stroke-width="1"/>
<rect x="464" y="737" width="5" height="30" fill="#54ffff"/>
<rect x="471" y="738" width="5" height="29" fill="#54ffff"/>
<rect x="478" y="753" width="5" height="14" fill="#54ffff"/>
<rect x="485.5" y="753.5" width="4" height="13" fill="none" stroke="#ff3232" stroke-width="1"/>
<rect x="492" y="742" width="5" height="25" fill="#54ffff"/>
<rect x="499" y="744" width="5" height="23" fill="#54ffff"/>
<rect x="506.5" y="748.5" width="4" height="18" fill="none" stroke="#ff3232" stroke-width="1"/>
<rect x="513.5" y="745.5" width="4" height="21" fill="none" stroke="#ff3232" stroke-width="1"/>
<rect x="520" y="750" width="5" height="17" fill="#54ffff"/>
<rect x="527" y="743" width="5" height="24" fill="#54ffff"/>
<rect x="534.5" y="744.5" width="4" height="22" fill="none" stroke="#ff3232" stroke-width="1"/>
<rect x="541.5" y="722.5" width="4" height="44" fill="none" stroke="#ff3232" stroke-width="1"/>
<rect x="548" y="745" width="5" height="22" fill="#54ffff"/>
<rect x="555" y="748" width="5" height="19" fill="#54ffff"/>
<rect x="562.5" y="750.5" width="4" height="16" fill="none" stroke="#ff3232" stroke-width="1"/>
<rect x="569" y="754" width="5" height="13" fill="#54ffff"/>
<rect x="576" y="754" width="5" height="13" fill="#54ffff"/>
<rect x="583" y="749" width="5" height="18" fill="#54ffff"/>
<rect x="590" y="752" width="5" height="15" fill="#54ffff"/>
<rect x="597.5" y="751.5" width="4" height="15" fill="none" stroke="#ff3232" stroke-width="1"/>
<rect x="604" y="756" width="5" height="11" fill="#54ffff"/>
<rect x="611.5" y="748.5" width="4" height="18" fill="none" stroke="#ff3232" stroke-width="1"/>
<rect x="618.5" y="754.5" width="4" height="12" fill="none" stroke="#ff3232" stroke-width="1"/>
<rect x="625.5" y="739.5" width="4" height="27" fill="none" stroke="#ff3232" stroke-width="1"/>
<rect x="632.5" y="744.5" width="4" height="22" fill="none" stroke="#ff3232" stroke-width="1"/>
<rect x="639.5" y="748.5" width="4" height="18" fill="none" stroke="#ff3232" stroke-width="1"/>
<rect x="646.5" y="735.5" width="4" height="31" fill="none" stroke="#ff3232" stroke-width="1"/>
<rect x="653.5" y="739.5" width="4" height="27" fill="none" stroke="#ff3232" stroke-width="1"/>
<rect x="660" y="738" width="5" height="29" fill="#54ffff"/>
<rect x="667" y="752" width="5" height="15" fill="#54ffff"/>
<rect x="674.5" y="749.5" width="4" height="17" fill="none" stroke="#ff3232" stroke-width="1"/>
<rect x="681.5" y="752.5" width="4" height="14" fill="none" stroke="#ff3232" stroke-width="1"/>
<rect x="688" y="755" width="5" height="12" fill="#54ffff"/>
<rect x="695.5" y="749.5" width="4" height="17" fill="none" stroke="#ff3232" stroke-width="1"/>
<rect x="702" y="753" width="5" height="14" fill="#54ffff"/>
<rect x="709" y="754" width="5" height="13" fill="#54ffff"/>
<rect x="716.5" y="755.5" width="4" height="11" fill="none" stroke="#ff3232" stroke-width="1"/>
<rect x="723.5" y="753.5" width="4" height="13" fill="none" stroke="#ff3232" stroke-width="1"/>
<rect x="730.5" y="753.5" width="4" height="13" fill="none" stroke="#ff3232" stroke-width="1"/>
<rect x="737.5" y="749.5" width="4" height="17" fill="none" stroke="#ff3232" stroke-width="1"/>
<rect x="744" y="751" width="5" height="16" fill="#54ffff"/>
<rect x="751.5" y="748.5" width="4" height="18" fill="none" stroke="#ff3232" stroke-width="1"/>
<rect x="758.5" y="685.5" width="4" height="81" fill="none" stroke="#ff3232" stroke-width="1"/>
<rect x="765" y="725" width="5" height="42" fill="#54ffff"/>
<rect x="772" y="738" width="5" height="29" fill="#54ffff"/>
<rect x="779.5" y="715.5" width="4" height="51" fill="none" stroke="#ff3232" stroke-width="1"/>
<rect x="786.5" y="727.5" width="4" height="39" fill="none" stroke="#ff3232" stroke-width="1"/>
<rect x="793" y="743" width="5" height="24" fill="#54ffff"/>
<rect x="800" y="733" width="5" height="34" fill="#54ffff"/>
<rect x="807.5" y="746.5" width="4" height="20" fill="none" stroke="#ff3232" stroke-width="1"/>
<rect x="814" y="755" width="5" height="12" fill="#54ffff"/>
<rect x="821" y="758" width="5" height="9" fill="#54ffff"/>
<rect x="828" y="750" width="5" height="17" fill="#54ffff"/>
<rect x="835.5" y="755.5" width="4" height="11" fill="none" stroke="#ff3232" stroke-width="1"/>
<rect x="842" y="759" width="5" height="8" fill="#54ffff"/>
<rect x="849" y="761" width="5" height="6" fill="#54ffff"/>
<rect x="856.5" y="759.5" width="4" height="7" fill="none" stroke="#ff3232" stroke-width="1"/>
<rect x="863.5" y="758.5" width="4" height="8" fill="none" stroke="#ff3232" stroke-width="1"/>
<rect x="870" y="759" width="5" height="8" fill="#54ffff"/>
<rect x="877" y="754" width="5" height="13" fill="#54ffff"/>
<rect x="884" y="755" width="5" height="12" fill="#54ffff"/>
<rect x="891.5" y="758.5" width="4" height="8" fill="none" stroke="#ff3232" stroke-width="1"/>
<rect x="898.5" y="758.5" width="4" height="8" fill="none" stroke="#ff3232" stroke-width="1"/>
<rect x="905" y="760" width="5" height="7" fill="#54ffff"/>
<rect x="912.5" y="759.5" width="4" height="7" fill="none" stroke="#ff3232" stroke-width="1"/>
<rect x="919.5" y="751.5" width="4" height="15" fill="none" stroke="#ff3232" stroke-width="1"/>
<rect x="926" y="752" width="5" height="15" fill="#54ffff"/>
<rect x="933.5" y="752.5" width="4" height="14" fill="none" stroke="#ff3232" stroke-width="1"/>
<rect x="940" y="735" width="5" height="32" fill="#54ffff"/>
<rect x="947" y="745" width="5" height="22" fill="#54ffff"/>
<rect x="954" y="661" width="5" height="106" fill="#54ffff"/>
<rect x="961.5" y="731.5" width="4" height="35" fill="none" stroke="#ff3232" stroke-width="1"/>
<rect x="968.5" y="725.5" width="4" height="41" fill="none" stroke="#ff3232" stroke-width="1"/>
<rect x="975" y="733" width="5" height="34" fill="#54ffff"/>
<rect x="982" y="738" width="5" height="29" fill="#54ffff"/>
<rect x="989" y="745" width="5" height="22" fill="#54ffff"/>
<rect x="996.5" y="753.5" width="4" height="13" fill="none" stroke="#ff3232" stroke-width="1"/>
<rect x="1003.5" y="744.5" width="4" height="22" fill="none" stroke="#ff3232" stroke-width="1"/>
<rect x="1010.5" y="755.5" width="4" height="11" fill="none" stroke="#ff3232" stroke-width="1"/>
<rect x="1017" y="752" width="5" height="15" fill="#54ffff"/>
<rect x="1024.5" y="734.5" width="4" height="32" fill="none" stroke="#ff3232" stroke-width="1"/>
<rect x="1031.5" y="732.5" width="4" height="34" fill="none" stroke="#ff3232" stroke-width="1"/>
<rect x="1038" y="734" width="5" height="33" fill="#54ffff"/>
<rect x="1045.5" y="731.5" width="4" height="35" fill="none" stroke="#ff3232" stroke-width="1"/>
<rect x="1052.5" y="716.5" width="4" height="50" fill="none" stroke="#ff3232" stroke-width="1"/>
<rect x="1059.5" y="740.5" width="4" height="26" fill="none" stroke="#ff3232" stroke-width="1"/>
<rect x="1066" y="746" width="5" height="21" fill="#54ffff"/>
<rect x="1073.5" y="736.5" width="4" height="30" fill="none" stroke="#ff3232" stroke-width="1"/>
<rect x="1080.5" y="719.5" width="4" height="47" fill="none" stroke="#ff3232" stroke-width="1"/>
<rect x="1087.5" y="724.5" width="4" height="42" fill="none" stroke="#ff3232" stroke-width="1"/>
<rect x="1094.5" y="707.5" width="4" height="59" fill="none" stroke="#ff3232" stroke-width="1"/>
<rect x="1101.5" y="672.5" width="4" height="94" fill="none" stroke="#ff3232" stroke-width="1"/>
<rect x="1108.5" y="668.5" width="4" height="98" fill="none" stroke="#ff3232" stroke-width="1"/>
<rect x="1115.5" y="637.5" width="4" height="129" fill="none" stroke="#ff3232" stroke-width="1"/>
<rect x="1122" y="680" width="5" height="87" fill="#54ffff"/>
<rect x="1129.5" y="724.5" width="4" height="42" fill="none" stroke="#ff3232" stroke-width="1"/>
<rect x="1136.5" y="716.5" width="4" height="50" fill="none" stroke="#ff3232" stroke-width="1"/>
<rect x="1143.5" y="700.5" width="4" height="66" fill="none" stroke="#ff3232" stroke-width="1"/>
<rect x="1150.5" y="709.5" width="4" height="57" fill="none" stroke="#ff3232" stroke-width="1"/>
<rect x="1157" y="657" width="5" height="110" fill="#54ffff"/>
<rect x="1164.5" y="669.5" width="4" height="97" fill="none" stroke="#ff3232" stroke-width="1"/>
<rect x="1171" y="674" width="5" height="93" fill="#54ffff"/>
<rect x="1178" y="727" width="5" height="40" fill="#54ffff"/>
<rect x="1185.5" y="720.5" width="4" height="46" fill="none" stroke="#ff3232" stroke-width="1"/>
<rect x="1192" y="656" width="5" height="111" fill="#54ffff"/>
<rect x="1199.5" y="728.5" width="4" height="38" fill="none" stroke="#ff3232" stroke-width="1"/>
</g>
<path d="M25 743.5h2M27 742.5h4M31 741.5h3M34 740.5h1M35 739.5h2M37 738.5h2M39 737.5h2M41 736.5h2M43 735.5h2M45 734.5h2M47 733.5h2M49 732.5h1M50 731.5h2M52 730.5h12M64 731.5h4M68 732.5h3M71 733.5h2M73 734.5h3M76 735.5h7M83 734.5h2M85 733.5h2M87 732.5h2M89 731.5h4M93 730.5h3M96 729.5h1M97 728.5h2M99 727.5h1M100 726.5h2M102 725.5h1M103 724.5h3M106 723.5h2M108 722.5h4M112 723.5h3M115 724.5h12M127 723.5h7M134 722.5h6M140 721.5h7M147 720.5h6M153 721.5h4M157 722.5h3M160 723.5h2M162 724.5h3M165 725.5h1M166 726.5h1M167 727.5h1M168.5 728v2M169 730.5h1M170 731.5h1M171 732.5h1M172 733.5h2M174 734.5h1M175 735.5h1M176 736.5h1M177 737.5h4M181 738.5h5M186 739.5h3M189 740.5h2M191 741.5h2M193 742.5h8M201 743.5h4M205 744.5h5M210 745.5h7M217 746.5h6M223 745.5h2M225 744.5h2M227 743.5h5M232 742.5h5M237 741.5h2M239 740.5h2M241 739.5h6M247 740.5h6M253 741.5h12M265 742.5h5M270 743.5h2M272 742.5h15M287 741.5h4M291 740.5h2M293 739.5h1M294 738.5h1M295 737.5h1M296 736.5h1M297 735.5h1M298 734.5h1M299 733.5h2M301 732.5h1M302 731.5h1M303 730.5h2M305 729.5h8M313 728.5h4M317 727.5h4M321 726.5h3M324 725.5h3M327 724.5h3M330 723.5h2M332 722.5h2M334 721.5h3M337 720.5h3M340 719.5h2M342 718.5h2M344 717.5h2M346 716.5h2M348 715.5h4M352 714.5h10M362 715.5h1M363 716.5h1M364.5 717v2M365 719.5h1M366 720.5h1M367 721.5h1M368 722.5h1M369 723.5h2M371 724.5h2M373 725.5h3M375 726.5h4M379 727.5h3M382 728.5h9M391 729.5h3M394 730.5h4M398 731.5h4M402 732.5h7M409 733.5h3M412 734.5h3M415 735.5h2M417 736.5h2M419 737.5h3M422 738.5h2M424 739.5h16M440 740.5h3M443 741.5h2M445 742.5h4M449 743.5h4M453 744.5h3M456 745.5h3M459 746.5h3M462 745.5h21M483 746.5h16M499 747.5h14M513 746.5h25M538 745.5h3M541 744.5h5M546 743.5h17M563 744.5h5M568 745.5h15M583 746.5h14M597 747.5h5M602 748.5h5M607 749.5h2M609 750.5h2M611 751.5h3M614 752.5h10M624 751.5h5M629 750.5h14M643 749.5h3M646 748.5h6M652 747.5h6M658 746.5h3M661 745.5h34M695 746.5h6M701 747.5h6M707 748.5h4M711 749.5h5M716 750.5h5M721 751.5h8M729 752.5h25M754 751.5h1M755 750.5h1M756 749.5h1M757 748.5h1M758 747.5h1M759 746.5h1M760 745.5h2M762 744.5h3M765 743.5h4M769 742.5h4M773 741.5h3M776 740.5h1M777 739.5h2M779 738.5h2M781 737.5h2M783 736.5h2M785 735.5h2M787 734.5h5M792 733.5h5M797 732.5h4M801 731.5h21M822 732.5h2M824 733.5h1M825 734.5h1M826 735.5h1M827 736.5h1M828 737.5h1M829 738.5h1M830 739.5h2M832 740.5h3M835 741.5h2M837 742.5h4M841 743.5h3M844 744.5h2M846 745.5h1M847 746.5h2M849 747.5h1M850 748.5h1M851 749.5h2M853 750.5h2M855 751.5h2M857 752.5h5M862 753.5h5M867 754.5h2M869 755.5h2M871 756.5h7M878 757.5h20M898 758.5h20M918 757.5h4M922 756.5h15M937 755.5h2M939 754.5h2M941 753.5h5M946 752.5h4M950 751.5h1M951.5 749v2M952 748.5h1M953 747.5h1M954.5 745v2M955 744.5h1M956 743.5h1M957 742.5h3M960 741.5h2M962 740.5h2M964 739.5h2M966 738.5h3M969 737.5h2M971 736.5h3M974 735.5h2M976 734.5h3M979 733.5h4M983 732.5h19M1002 731.5h5M1007 732.5h5M1012 733.5h4M1016 734.5h4M1020 735.5h1M1021 736.5h1M1022 737.5h1M1023 738.5h1M1024 739.5h1M1025 740.5h1M1026 741.5h11M1037 742.5h12M1049 741.5h3M1052 740.5h6M1058 739.5h7M1065 738.5h11M1076 737.5h2M1078 736.5h2M1080 735.5h2M1082 734.5h2M1084 733.5h2M1086 732.5h2M1088 731.5h3M1091 730.5h3M1094 729.5h3M1097 728.5h1M1098 727.5h1M1099 726.5h1M1100 725.5h1M1101 724.5h1M1102 723.5h1M1103 722.5h1M1104 721.5h1M1105 720.5h1M1106 719.5h1M1107 718.5h1M1108 717.5h1M1109 716.5h1M1110 715.5h1M1111 714.5h1M1112.5 712v2M1113 711.5h1M1114 710.5h1M1115 709.5h1M1116 708.5h1M1117.5 706v2M1118 706.5h1M1119 705.5h2M1121 704.5h2M1123 703.5h3M1126 702.5h4M1130 701.5h3M1133 700.5h2M1135 699.5h2M1137 698.5h2M1139 697.5h3M1142 696.5h2M1144 695.5h5M1149 694.5h4M1153 693.5h1M1154 692.5h1M1155 691.5h1M1156 690.5h1M1157 689.5h1M1158 688.5h1M1159 687.5h1M1160 686.5h2M1162 685.5h2M1164 684.5h1M1165 683.5h9M1174 684.5h1M1175 685.5h1M1176 686.5h1M1177 687.5h1M1178 688.5h2M1180.5 689v2M1181 691.5h1M1182 692.5h1M1183 693.5h1M1184.5 694v2M1185 696.5h1M1186 697.5h1M1187 698.5h2M1189 697.5h2M1191 696.5h2M1193 695.5h5M1198 696.5h6" fill="none" stroke="#ffffff" stroke-width="1" shape-rendering="crispEdges"/>
<path d="M25 738.5h2M27 737.5h2M29 736.5h2M31 735.5h3M34 734.5h3M37 733.5h3M40 732.5h1M41.5 730v2M42 729.5h1M43 728.5h1M44 727.5h1M45.5 725v2M46 724.5h1M47 723.5h2M49 722.5h1M50 721.5h1M51 720.5h1M52 719.5h5M57 720.5h3M60 721.5h2M62 722.5h1M63 723.5h1M64 724.5h1M65 725.5h2M67 726.5h1M68 727.5h1M69 728.5h1M70 729.5h1M71 730.5h1M72.5 731v2M73 733.5h1M74 734.5h1M75 735.5h1M76.5 736v2M77 738.5h1M78.5 739v2M79 741.5h1M80.5 742v2M81 744.5h4M85 745.5h4M89 744.5h1M90 743.5h2M92 742.5h1M93 741.5h1M94 740.5h1M95 739.5h1M96.5 736v3M97.5 734v2M98.5 732v2M99.5 730v2M100.5 728v2M101.5 726v2M102.5 724v2M103.5 722v2M104.5 720v2M105.5 718v2M106.5 716v2M107.5 714v2M108.5 712v2M109.5 710v2M110 709.5h2M112 708.5h1M113 707.5h2M115 706.5h1M116 705.5h4M120 704.5h5M125 705.5h2M127 706.5h2M129 707.5h2M130 708.5h1M131.5 709v2M132.5 711v2M133.5 713v2M134.5 715v2M135.5 717v2M136.5 719v2M137.5 721v2M138 723.5h1M139.5 724v2M140 726.5h1M141.5 727v2M142 729.5h1M143.5 730v2M144 732.5h2M146 733.5h3M149 734.5h2M151 735.5h1M152 736.5h2M154 737.5h1M155 738.5h2M157 739.5h1M158 740.5h2M160 741.5h3M163 742.5h2M165 743.5h4M169 744.5h6M175 745.5h9M184 744.5h6M190 743.5h7M197 742.5h4M201 743.5h4M205 744.5h4M209 745.5h3M212 746.5h4M216 747.5h4M220 748.5h2M222 747.5h2M224 746.5h1M225 745.5h2M227 744.5h2M229 743.5h3M232 742.5h4M236 741.5h1M237 740.5h1M238 739.5h1M239 738.5h1M240 737.5h1M241 736.5h1M242 735.5h5M247 734.5h5M252 733.5h5M257 734.5h1M258 735.5h1M259 736.5h1M260 737.5h1M261 738.5h1M262 739.5h1M263 740.5h2M265 741.5h2M267 742.5h2M269 743.5h1M270 744.5h2M272 745.5h1M273 746.5h1M274 747.5h1M275 748.5h1M276 749.5h1M277 750.5h3M280 749.5h5M285 748.5h2M287 747.5h2M289 746.5h2M291 745.5h1M292.5 742v3M293.5 739v3M294.5 736v3M295.5 734v2M296.5 731v3M297.5 728v3M298.5 726v2M299.5 724v2M300 723.5h1M301.5 721v2M302.5 719v2M303.5 717v2M304 716.5h1M305.5 714v2M306 713.5h1M307 712.5h1M308 711.5h1M309 710.5h1M310 709.5h1M311 708.5h1M312 707.5h1M313 706.5h3M316 705.5h3M319 704.5h4M323 703.5h4M327.5 704v2M328.5 706v2M329 708.5h1M330.5 709v2M331 711.5h1M332.5 712v2M333.5 714v2M334 716.5h1M335.5 717v2M336 719.5h1M337.5 720v2M338 722.5h1M339.5 723v2M340 725.5h6M346 726.5h3M349 725.5h4M353 724.5h4M357 725.5h5M362 726.5h2M364 727.5h2M366 728.5h2M368 729.5h1M369 728.5h3M372 727.5h2M374 726.5h2M376 727.5h2M378 728.5h2M380 729.5h1M381 730.5h2M383 731.5h3M386 732.5h2M388 733.5h3M391 734.5h2M393 735.5h3M396 736.5h2M398 735.5h4M402 734.5h2M404 735.5h1M405 736.5h1M406 737.5h1M407 738.5h1M408 739.5h1M409 740.5h1M410 741.5h2M412 742.5h4M416 743.5h3M419 744.5h3M422 745.5h4M426 744.5h2M428 743.5h3M431 742.5h2M433 743.5h4M437 744.5h10M447 745.5h5M452 746.5h5M457 747.5h7M464 748.5h4M468 747.5h4M472 746.5h6M478 747.5h11M489 746.5h4M493 745.5h4M497 746.5h6M503 747.5h4M507 748.5h3M510 747.5h4M514 746.5h6M520 745.5h9M529 746.5h5M534 745.5h4M538 744.5h1M539 743.5h2M541 742.5h2M543 741.5h10M553 740.5h6M559 741.5h5M564 742.5h3M567 743.5h4M571 744.5h1M572 745.5h2M574 746.5h1M575 747.5h1M576 748.5h1M577 749.5h1M578 750.5h4M582 751.5h7M589 752.5h14M603 753.5h6M609 752.5h13M622 751.5h3M625 750.5h4M629 749.5h3M632 748.5h6M638 747.5h5M643 746.5h2M645 745.5h3M648 744.5h2M650 743.5h2M652 742.5h3M655 741.5h10M665 742.5h7M672 743.5h6M678 744.5h2M680 745.5h2M682 746.5h3M685 747.5h2M687 748.5h2M689 749.5h3M692 750.5h5M697 751.5h4M701 752.5h6M707 753.5h35M742 752.5h7M749 751.5h5M753 750.5h1M754.5 748v2M755.5 746v2M756.5 744v2M757.5 742v2M758.5 740v2M759.5 738v2M760 737.5h1M761 736.5h1M762 735.5h2M764 734.5h1M765 733.5h1M766 732.5h2M768 731.5h3M771 730.5h2M773 729.5h2M775.5 727v2M776 726.5h1M777 725.5h1M778 724.5h1M779 723.5h1M780 722.5h1M781 721.5h1M782 720.5h3M785 719.5h2M787 718.5h2M789.5 719v2M790 721.5h1M791.5 722v2M792 724.5h1M793.5 725v2M794.5 727v2M795 729.5h3M798 730.5h3M801 731.5h3M804 732.5h4M808 733.5h2M810 734.5h1M811 735.5h1M812.5 736v2M813 738.5h1M814 739.5h1M815 740.5h1M816 741.5h1M817 742.5h1M818 743.5h1M819 744.5h1M820 745.5h2M822 746.5h1M823 747.5h3M826 748.5h4M830 749.5h2M832 750.5h2M834 751.5h1M835 752.5h2M837 753.5h3M840 754.5h3M843 755.5h4M847 756.5h3M850 757.5h12M862 758.5h6M868 759.5h8M876 758.5h6M882 757.5h41M923 756.5h9M932 755.5h4M936 754.5h1M937 753.5h2M939 752.5h1M940 751.5h2M942 750.5h1M943 749.5h2M945 748.5h3M948 747.5h2M949 746.5h1M950.5 743v3M951.5 741v2M952.5 738v3M953.5 735v3M954.5 733v2M955.5 730v3M956.5 728v2M957 728.5h1M958 727.5h3M961 726.5h2M963 725.5h2M965 724.5h1M966 723.5h1M967 722.5h1M968 721.5h1M969 720.5h1M970 719.5h10M980 718.5h5M985.5 719v3M986.5 722v2M987.5 724v2M988.5 726v3M989.5 729v2M990.5 731v3M991 734.5h1M992 735.5h1M993 736.5h2M995 737.5h1M996 738.5h2M998 739.5h1M999 740.5h2M1001 741.5h2M1003 742.5h2M1005 743.5h2M1007 744.5h2M1009 745.5h1M1010 746.5h2M1012 747.5h2M1014 748.5h3M1017 749.5h2M1019 750.5h1M1020 749.5h2M1022 748.5h2M1024 747.5h2M1026 746.5h2M1028 745.5h2M1030 744.5h2M1032 743.5h3M1035 742.5h4M1039 741.5h3M1042 740.5h1M1043 739.5h2M1045 738.5h2M1047 737.5h1M1048 736.5h1M1049 735.5h1M1050.5 733v2M1051 732.5h1M1052 731.5h1M1053.5 729v2M1054 729.5h2M1056 730.5h4M1060 731.5h3M1063 732.5h4M1067 733.5h5M1072 734.5h5M1077 733.5h2M1079 732.5h2M1081 731.5h4M1085 732.5h6M1091 731.5h1M1092 730.5h1M1093 729.5h1M1094 728.5h1M1095 727.5h1M1096 726.5h1M1097.5 724v2M1098.5 721v3M1099.5 719v2M1100.5 717v2M1101.5 715v2M1102.5 712v3M1103.5 710v2M1104.5 708v2M1105.5 706v2M1106.5 703v3M1107.5 701v2M1108.5 699v2M1109.5 697v2M1110.5 694v3M1111.5 692v2M1112.5 690v2M1113.5 688v2M1114.5 686v2M1115.5 684v2M1116.5 682v2M1117.5 680v2M1118 679.5h1M1119 678.5h1M1120 677.5h1M1121 676.5h1M1122 675.5h1M1123 674.5h1M1124 673.5h2M1126 674.5h2M1128 675.5h3M1131 676.5h1M1132 677.5h1M1133 678.5h1M1134.5 679v2M1135 681.5h1M1136 682.5h1M1137 683.5h1M1138 684.5h1M1139 685.5h1M1140 686.5h1M1141 687.5h1M1142 688.5h1M1143 689.5h1M1144 690.5h1M1145.5 691v2M1146.5 693v2M1147.5 695v2M1148.5 697v2M1149.5 699v2M1150.5 701v2M1151.5 703v2M1152.5 705v2M1153 705.5h2M1155 704.5h1M1156 703.5h2M1158 702.5h2M1159 701.5h1M1160 700.5h1M1161.5 698v2M1162.5 696v2M1163 695.5h1M1164.5 693v2M1165.5 691v2M1166 690.5h1M1167 689.5h1M1168 688.5h1M1169 687.5h1M1170.5 685v2M1171 684.5h1M1172 683.5h1M1173 682.5h1M1174 683.5h2M1176 684.5h1M1177 685.5h1M1178 686.5h1M1179 687.5h3M1182 688.5h5M1187 689.5h8M1195.5 690v2M1196.5 692v2M1197.5 694v2M1198.5 696v2M1199 698.5h1M1200.5 699v2M1201.5 701v2M1202 703.5h2" fill="none" stroke="#ffff00" stroke-width="1" shape-rendering="crispEdges"/>
<g shape-rendering="crispEdges">
<rect x="32" y="883" width="1" height="4" fill="#ffff00"/>
<rect x="39" y="882" width="1" height="8" fill="#ffff00"/>
<rect x="53" y="891" width="1" height="7" fill="#ffff00"/>
<rect x="60" y="905" width="1" height="6" fill="#ffff00"/>
<rect x="74" y="918" width="1" height="4" fill="#ff0000"/>
<rect x="81" y="922" width="1" height="6" fill="#ff0000"/>
<rect x="88" y="928" width="1" height="10" fill="#ff0000"/>
<rect x="95" y="913" width="1" height="22" fill="#ff0000"/>
<rect x="102" y="904" width="1" height="17" fill="#ff0000"/>
<rect x="109" y="898" width="1" height="20" fill="#ff0000"/>
<rect x="116" y="898" width="1" height="20" fill="#ff0000"/>
<rect x="123" y="898" width="1" height="19" fill="#ff0000"/>
<rect x="130" y="901" width="1" height="17" fill="#ff0000"/>
<rect x="137" y="903" width="1" height="15" fill="#ff0000"/>
<rect x="144" y="907" width="1" height="14" fill="#ff0000"/>
<rect x="151" y="910" width="1" height="13" fill="#ff0000"/>
<rect x="158" y="915" width="1" height="11" fill="#ff0000"/>
<rect x="165" y="916" width="1" height="11" fill="#ff0000"/>
<rect x="172" y="910" width="1" height="17" fill="#ff0000"/>
<rect x="179" y="908" width="1" height="17" fill="#ff0000"/>
<rect x="186" y="913" width="1" height="14" fill="#ff0000"/>
<rect x="193" y="917" width="1" height="14" fill="#ff0000"/>
<rect x="200" y="923" width="1" height="11" fill="#ff0000"/>
<rect x="207" y="925" width="1" height="12" fill="#ff0000"/>
<rect x="214" y="928" width="1" height="12" fill="#ff0000"/>
<rect x="221" y="927" width="1" height="15" fill="#ff0000"/>
<rect x="228" y="915" width="1" height="25" fill="#ff0000"/>
<rect x="235" y="905" width="1" height="29" fill="#ff0000"/>
<rect x="242" y="901" width="1" height="27" fill="#ff0000"/>
<rect x="249" y="907" width="1" height="22" fill="#ff0000"/>
<rect x="256" y="913" width="1" height="19" fill="#ff0000"/>
<rect x="263" y="914" width="1" height="20" fill="#ff0000"/>
<rect x="270" y="917" width="1" height="17" fill="#ff0000"/>
<rect x="277" y="910" width="1" height="21" fill="#ff0000"/>
<rect x="284" y="902" width="1" height="15" fill="#ff0000"/>
<rect x="291" y="892" width="1" height="16" fill="#ff0000"/>
<rect x="298" y="858" width="1" height="32" fill="#ff0000"/>
<rect x="305" y="842" width="1" height="35" fill="#ff0000"/>
<rect x="312" y="827" width="1" height="38" fill="#ff0000"/>
<rect x="319" y="813" width="1" height="41" fill="#ff0000"/>
<rect x="326" y="805" width="1" height="40" fill="#ff0000"/>
<rect x="333" y="811" width="1" height="32" fill="#ff0000"/>
<rect x="340" y="801" width="1" height="40" fill="#ff0000"/>
<rect x="347" y="789" width="1" height="48" fill="#ff0000"/>
<rect x="354" y="800" width="1" height="37" fill="#ff0000"/>
<rect x="361" y="809" width="1" height="31" fill="#ff0000"/>
<rect x="368" y="814" width="1" height="27" fill="#ff0000"/>
<rect x="375" y="809" width="1" height="31" fill="#ff0000"/>
<rect x="382" y="815" width="1" height="25" fill="#ff0000"/>
<rect x="389" y="811" width="1" height="27" fill="#ff0000"/>
<rect x="396" y="808" width="1" height="28" fill="#ff0000"/>
<rect x="403" y="803" width="1" height="29" fill="#ff0000"/>
<rect x="410" y="806" width="1" height="25" fill="#ff0000"/>
<rect x="417" y="809" width="1" height="24" fill="#ff0000"/>
<rect x="424" y="821" width="1" height="13" fill="#ff0000"/>
<rect x="431" y="835" width="1" height="7" fill="#ff0000"/>
<rect x="438" y="848" width="1" height="3" fill="#ff0000"/>
<rect x="452" y="860" width="1" height="4" fill="#ff0000"/>
<rect x="459" y="857" width="1" height="9" fill="#ff0000"/>
<rect x="466" y="867" width="1" height="5" fill="#ff0000"/>
<rect x="473" y="876" width="1" height="3" fill="#ff0000"/>
<rect x="480" y="878" width="1" height="6" fill="#ff0000"/>
<rect x="487" y="878" width="1" height="11" fill="#ff0000"/>
<rect x="494" y="882" width="1" height="12" fill="#ff0000"/>
<rect x="501" y="892" width="1" height="10" fill="#ff0000"/>
<rect x="508" y="890" width="1" height="17" fill="#ff0000"/>
<rect x="515" y="884" width="1" height="23" fill="#ff0000"/>
<rect x="522" y="883" width="1" height="24" fill="#ff0000"/>
<rect x="529" y="885" width="1" height="31" fill="#ff0000"/>
<rect x="536" y="873" width="1" height="44" fill="#ff0000"/>
<rect x="543" y="847" width="1" height="61" fill="#ff0000"/>
<rect x="550" y="847" width="1" height="55" fill="#ff0000"/>
<rect x="557" y="853" width="1" height="49" fill="#ff0000"/>
<rect x="564" y="854" width="1" height="49" fill="#ff0000"/>
<rect x="571" y="858" width="1" height="46" fill="#ff0000"/>
<rect x="578" y="863" width="1" height="45" fill="#ff0000"/>
<rect x="585" y="866" width="1" height="45" fill="#ff0000"/>
<rect x="592" y="877" width="1" height="39" fill="#ff0000"/>
<rect x="599" y="879" width="1" height="40" fill="#ff0000"/>
<rect x="606" y="883" width="1" height="40" fill="#ff0000"/>
<rect x="613" y="877" width="1" height="47" fill="#ff0000"/>
<rect x="620" y="873" width="1" height="49" fill="#ff0000"/>
<rect x="627" y="864" width="1" height="53" fill="#ff0000"/>
<rect x="634" y="859" width="1" height="54" fill="#ff0000"/>
<rect x="641" y="857" width="1" height="53" fill="#ff0000"/>
<rect x="648" y="854" width="1" height="53" fill="#ff0000"/>
<rect x="655" y="847" width="1" height="54" fill="#ff0000"/>
<rect x="662" y="854" width="1" height="44" fill="#ff0000"/>
<rect x="669" y="862" width="1" height="39" fill="#ff0000"/>
<rect x="676" y="865" width="1" height="36" fill="#ff0000"/>
<rect x="683" y="869" width="1" height="36" fill="#ff0000"/>
<rect x="690" y="870" width="1" height="37" fill="#ff0000"/>
<rect x="697" y="869" width="1" height="39" fill="#ff0000"/>
<rect x="704" y="869" width="1" height="39" fill="#ff0000"/>
<rect x="711" y="876" width="1" height="35" fill="#ff0000"/>
<rect x="718" y="877" width="1" height="37" fill="#ff0000"/>
<rect x="725" y="874" width="1" height="40" fill="#ff0000"/>
<rect x="732" y="865" width="1" height="47" fill="#ff0000"/>
<rect x="739" y="856" width="1" height="49" fill="#ff0000"/>
<rect x="746" y="856" width="1" height="46" fill="#ff0000"/>
<rect x="753" y="848" width="1" height="53" fill="#ff0000"/>
<rect x="760" y="832" width="1" height="60" fill="#ff0000"/>
<rect x="767" y="817" width="1" height="60" fill="#ff0000"/>
<rect x="774" y="811" width="1" height="58" fill="#ff0000"/>
<rect x="781" y="799" width="1" height="62" fill="#ff0000"/>
<rect x="788" y="796" width="1" height="57" fill="#ff0000"/>
<rect x="795" y="807" width="1" height="45" fill="#ff0000"/>
<rect x="802" y="824" width="1" height="34" fill="#ff0000"/>
<rect x="809" y="825" width="1" height="37" fill="#ff0000"/>
<rect x="816" y="833" width="1" height="31" fill="#ff0000"/>
<rect x="823" y="840" width="1" height="29" fill="#ff0000"/>
<rect x="830" y="865" width="1" height="19" fill="#ff0000"/>
<rect x="837" y="874" width="1" height="22" fill="#ff0000"/>
<rect x="844" y="882" width="1" height="25" fill="#ff0000"/>
<rect x="851" y="889" width="1" height="29" fill="#ff0000"/>
<rect x="858" y="885" width="1" height="36" fill="#ff0000"/>
<rect x="865" y="874" width="1" height="45" fill="#ff0000"/>
<rect x="872" y="868" width="1" height="49" fill="#ff0000"/>
<rect x="879" y="875" width="1" height="47" fill="#ff0000"/>
<rect x="886" y="878" width="1" height="48" fill="#ff0000"/>
<rect x="893" y="878" width="1" height="48" fill="#ff0000"/>
<rect x="900" y="869" width="1" height="55" fill="#ff0000"/>
<rect x="907" y="865" width="1" height="58" fill="#ff0000"/>
<rect x="914" y="864" width="1" height="58" fill="#ff0000"/>
<rect x="921" y="864" width="1" height="57" fill="#ff0000"/>
<rect x="928" y="867" width="1" height="55" fill="#ff0000"/>
<rect x="935" y="872" width="1" height="53" fill="#ff0000"/>
<rect x="942" y="884" width="1" height="47" fill="#ff0000"/>
<rect x="949" y="900" width="1" height="38" fill="#ff0000"/>
<rect x="956" y="929" width="1" height="8" fill="#ff0000"/>
<rect x="984" y="937" width="1" height="6" fill="#ffff00"/>
<rect x="991" y="940" width="1" height="7" fill="#ffff00"/>
<rect x="998" y="943" width="1" height="3" fill="#ffff00"/>
<rect x="1005" y="940" width="1" height="4" fill="#ff0000"/>
<rect x="1012" y="937" width="1" height="7" fill="#ff0000"/>
<rect x="1019" y="936" width="1" height="6" fill="#ff0000"/>
<rect x="1026" y="924" width="1" height="15" fill="#ff0000"/>
<rect x="1033" y="911" width="1" height="22" fill="#ff0000"/>
<rect x="1040" y="903" width="1" height="24" fill="#ff0000"/>
<rect x="1047" y="887" width="1" height="31" fill="#ff0000"/>
<rect x="1054" y="863" width="1" height="36" fill="#ff0000"/>
<rect x="1061" y="850" width="1" height="33" fill="#ff0000"/>
<rect x="1068" y="845" width="1" height="22" fill="#ff0000"/>
<rect x="1075" y="843" width="1" height="13" fill="#ff0000"/>
<rect x="1082" y="840" width="1" height="7" fill="#ff0000"/>
<rect x="1089" y="835" width="1" height="6" fill="#ff0000"/>
<rect x="1096" y="820" width="1" height="16" fill="#ff0000"/>
<rect x="1103" y="793" width="1" height="42" fill="#ff0000"/>
<rect x="1110" y="788" width="1" height="48" fill="#ff0000"/>
<rect x="1117" y="788" width="1" height="47" fill="#ff0000"/>
<rect x="1124" y="801" width="1" height="35" fill="#ff0000"/>
<rect x="1131" y="804" width="1" height="32" fill="#ff0000"/>
<rect x="1138" y="799" width="1" height="35" fill="#ff0000"/>
<rect x="1145" y="793" width="1" height="37" fill="#ff0000"/>
<rect x="1152" y="790" width="1" height="38" fill="#ff0000"/>
<rect x="1159" y="822" width="1" height="13" fill="#ff0000"/>
<rect x="1166" y="810" width="1" height="25" fill="#ff0000"/>
<rect x="1173" y="809" width="1" height="25" fill="#ff0000"/>
<rect x="1180" y="819" width="1" height="16" fill="#ff0000"/>
<rect x="1187" y="824" width="1" height="13" fill="#ff0000"/>
<rect x="1194" y="841" width="1" height="2" fill="#ff0000"/>
<rect x="1201" y="839" width="1" height="7" fill="#ff0000"/>
</g>
<rect x="1003" y="890" width="4" height="76" fill="#ff0000" shape-rendering="crispEdges"/>
<rect x="25" y="965" width="1179" height="1" fill="#808080" shape-rendering="crispEdges"/>
<polyline points="25.4,887.4 32.6,887.4 39.3,889.9 46.5,879.6 53.3,898 60.6,911.5 67.4,916.4 74.2,917.7 81.5,922.2 88.3,928.9 95.4,913.5 102.2,903.8 109.4,897.6 116.3,897.6 123.5,897.6 130.3,900.9 137.4,902.8 144.4,907.3 151.5,910 158.3,915.4 165.5,916 172.4,910 179.6,907.7 186.3,912.5 193.5,917.3 200.5,922.7 207.6,925.1 214.6,928 220,928 221.5,927.4 228.5,915.4 235.5,904.8 242.4,900.9 249.4,906.7 256.6,913.5 263.5,913.8 270.5,916.9 277.4,910.6 284.4,901.9 291.6,891.8 298.5,858.3 305.5,841.9 312.5,827.4 319.4,812.9 326.6,804.8 333.5,810.6 340.5,801.3 347.5,788.7 354.4,800.3 361.6,809 368.5,814.4 375.5,809 382.5,815.4 389.4,810.6 396.4,807.7 403.6,803.2 410.5,805.5 417.5,809 420,812.9 424.4,820.6 431.4,835.1 438.6,847.7 445.5,857.4 452.5,860.3 459.5,857.4 466.4,867 473.6,876.1 480.5,877.7 487.5,877.7 494.5,881.5 501.4,891.8 508.6,890.3 515.6,884.4 522.5,883.1 529.5,884.8 536.4,872.8 543.6,847.1 550.6,847.1 557.5,852.5 564.5,854.1 571.5,858.3 578.6,863.2 585.6,866.1 592.5,877.3 599.5,879 606.5,883.5 613.6,877.3 620,873.8 627.5,864.1 634.5,859.3 641.5,857.4 648.4,854.5 655.6,846.7 662.6,854.5 669.5,862.2 676.5,865.1 683.4,869 690.6,869.6 697.6,869 704.5,869 711.5,875.7 718.5,876.7 725.6,873.8 732.6,865.1 739.5,856.4 746.5,855.8 753.5,847.7 760.6,831.3 767.6,816.8 774.5,810.9 781.5,799.3 788.5,795.9 795.6,807.1 802.6,824.1 809.6,824.9 816.5,833.2 820,836.1 823.5,840 830.4,865.1 837.4,873.8 844.6,882.5 851.5,889.3 858.5,885.4 865.5,873.8 872.4,868 879.6,875.4 886.5,877.7 893.5,877.7 900.5,869 907.4,865.1 914.6,864.1 921.5,864.1 928.5,867 935.5,871.9 942.4,883.5 949.6,899.9 956.6,928.9 963.5,934.7 970.5,932.8 977.4,937.6 984.6,943.4 991.6,946.7 998.5,946.3 1004,940.5 1005.4,940.1 1012.4,937.4 1019.4,935.8 1026.4,924 1033.4,911.3 1040.4,903.5 1047.4,887 1054.4,863.3 1061.4,850 1068.4,845.4 1075.4,843.4 1082.4,839.7 1089.4,835.6 1096.4,820.1 1103.4,793.4 1110.4,788.2 1117.4,788.2 1124.4,800.6 1131.4,804.3 1138.4,799.5 1145.4,793.4 1152.4,789.3 1159.3,822.2 1166.3,810.5 1173.3,808.8 1180.3,819.1 1187.3,823.2 1194.3,840.7 1201.3,839.7 1204,836.6" fill="none" stroke="#ff00ff" stroke-width="2" stroke-linejoin="round" shape-rendering="crispEdges"/>
<path d="M25 885.5h1M26 884.5h3M29 883.5h2M31 882.5h9M40 881.5h2M42 880.5h2M44 879.5h1M45 878.5h2M47.5 879v2M48.5 881v2M49 883.5h1M50.5 884v2M51.5 886v2M52.5 888v2M53.5 890v2M54.5 892v2M55.5 894v2M56.5 896v2M57.5 898v2M58.5 900v2M59.5 902v2M60.5 904v2M61.5 906v2M62 908.5h1M63.5 909v2M64.5 911v2M65 913.5h1M66.5 914v2M67 916.5h1M68 917.5h2M70 918.5h1M71 919.5h1M72 920.5h2M74 921.5h1M75 922.5h1M76 923.5h1M77 924.5h1M78 925.5h1M79 926.5h1M80 927.5h2M81 928.5h1M82 929.5h1M83.5 930v2M84 932.5h1M85 933.5h1M86.5 934v2M87 936.5h1M88 937.5h2M90 936.5h2M92 935.5h3M95 934.5h1M96.5 932v2M97.5 930v2M98.5 928v2M99.5 926v2M100.5 924v2M101.5 922v2M102 921.5h1M103 920.5h2M105 919.5h2M107 918.5h2M109 917.5h14M123 916.5h1M124 917.5h14M138 918.5h2M140 919.5h3M143 920.5h2M145 921.5h3M148 922.5h3M151 923.5h3M154 924.5h2M156 925.5h2M158 926.5h5M163 927.5h10M172 926.5h5M177 925.5h4M181 926.5h4M185 927.5h3M188 928.5h2M190 929.5h2M192 930.5h2M194 931.5h2M196 932.5h3M199 933.5h2M201 934.5h2M203 935.5h3M206 936.5h2M208 937.5h2M210 938.5h2M212 939.5h2M214 940.5h2M216 941.5h3M219 942.5h2M221 941.5h3M224 940.5h3M227 939.5h2M229 938.5h1M230 937.5h2M232 936.5h1M233 935.5h1M234 934.5h1M235 933.5h1M236 932.5h2M238 931.5h1M239 930.5h1M240 929.5h1M241 928.5h1M242 927.5h1M243 928.5h7M250 929.5h3M253 930.5h2M255 931.5h2M257 932.5h4M261 933.5h5M266 934.5h5M271 933.5h2M273 932.5h2M275 931.5h2M277 930.5h1M278.5 928v2M279.5 926v2M280.5 924v2M281.5 922v2M282.5 920v2M283.5 918v2M284 917.5h1M285.5 915v2M286 914.5h1M287.5 912v2M288 911.5h1M289 910.5h1M290.5 908v2M291 907.5h1M292.5 904v3M293.5 902v2M294.5 899v3M295.5 897v2M296.5 894v3M297.5 892v2M298.5 889v3M299.5 887v2M300.5 885v2M301 884.5h1M302.5 882v2M303.5 880v2M304.5 878v2M305.5 876v2M306.5 874v2M307 873.5h1M308.5 871v2M309.5 869v2M310 868.5h1M311.5 866v2M312.5 864v2M313 863.5h1M314.5 861v2M315 860.5h1M316.5 858v2M317 857.5h1M318.5 855v2M319 854.5h1M320.5 852v2M321 851.5h1M322 850.5h1M323 849.5h1M324.5 847v2M325 846.5h1M326 845.5h2M328 844.5h2M330 843.5h3M333 842.5h3M336 841.5h3M339 840.5h3M342 839.5h2M344 838.5h2M346 837.5h10M356 838.5h4M360 839.5h3M363 840.5h4M367 841.5h3M370 840.5h4M374 839.5h5M379 840.5h5M384 839.5h3M387 838.5h3M390 837.5h3M393 836.5h4M397 835.5h1M398 834.5h2M400 833.5h2M402 832.5h3M405 831.5h9M414 832.5h5M419 833.5h5M424 834.5h1M425 835.5h1M426 836.5h1M427 837.5h1M428 838.5h1M429 839.5h1M430 840.5h1M431.5 841v2M432 843.5h1M433 844.5h1M434 845.5h1M435 846.5h1M436.5 847v2M437 849.5h1M438 850.5h1M439 851.5h1M440 852.5h1M441 853.5h1M442.5 854v2M443 856.5h1M444 857.5h1M445 858.5h1M446 859.5h2M448 860.5h1M449 861.5h1M450 862.5h1M451 863.5h1M452 864.5h4M456 865.5h3M459 866.5h2M461 867.5h1M462 868.5h1M463 869.5h1M464 870.5h1M465 871.5h2M467 872.5h1M468 873.5h1M469 874.5h1M470 875.5h1M471 876.5h1M472 877.5h1M473 878.5h1M474 879.5h1M475 880.5h1M476 881.5h2M478 882.5h1M479 883.5h1M480 884.5h1M481 885.5h2M483 886.5h1M484 887.5h2M486 888.5h1M487 889.5h2M489 890.5h1M490 891.5h1M491 892.5h2M493 893.5h1M494 894.5h1M495 895.5h1M496 896.5h1M497 897.5h1M498 898.5h1M499 899.5h1M500 900.5h1M501 901.5h1M502 902.5h1M503 903.5h1M504 904.5h2M506 905.5h1M507 906.5h1M508 907.5h15M523 908.5h1M524 909.5h1M525.5 910v2M526 912.5h1M527 913.5h1M528 914.5h1M529 915.5h1M530 916.5h5M535 917.5h2M537.5 915v2M538 914.5h1M539 913.5h1M540.5 911v2M541 910.5h1M542.5 908v2M543 907.5h1M544 906.5h1M545 905.5h2M547 904.5h1M548 903.5h1M549 902.5h1M550 901.5h5M555 902.5h7M562 903.5h7M569 904.5h4M573 905.5h2M575 906.5h2M577 907.5h2M579 908.5h2M581 909.5h2M583 910.5h2M585 911.5h2M587 912.5h1M588 913.5h1M589 914.5h2M591 915.5h1M592 916.5h2M594 917.5h2M596 918.5h3M599 919.5h2M601 920.5h2M603 921.5h1M604 922.5h2M606 923.5h7M613 924.5h1M614 923.5h3M617 922.5h4M620 921.5h2M622 920.5h1M623 919.5h2M625 918.5h1M626 917.5h2M628 916.5h2M630 915.5h2M632 914.5h2M634 913.5h1M635 912.5h3M638 911.5h2M640 910.5h2M642 909.5h2M644 908.5h2M646 907.5h2M648 906.5h1M649 905.5h2M651 904.5h1M652 903.5h1M653 902.5h1M654 901.5h1M655 900.5h3M658 899.5h3M661 898.5h3M664 899.5h2M666 900.5h2M668 901.5h10M678 902.5h2M680 903.5h2M682 904.5h2M684 905.5h4M688 906.5h5M693 907.5h12M705 908.5h2M707 909.5h2M709 910.5h2M711 911.5h3M714 912.5h2M716 913.5h2M718 914.5h8M726 913.5h2M728 912.5h3M731 911.5h2M733 910.5h1M734 909.5h1M735 908.5h2M737 907.5h1M738 906.5h1M739 905.5h1M740 904.5h3M743 903.5h2M745 902.5h4M749 901.5h5M754.5 899v2M755 898.5h1M756 897.5h1M757 896.5h1M758.5 894v2M759 893.5h1M760.5 891v2M761.5 889v2M762.5 887v2M763.5 885v2M764.5 882v3M765.5 880v2M766.5 878v2M767.5 876v2M768 875.5h1M769 874.5h1M770 873.5h1M771 872.5h1M772 871.5h1M773 870.5h1M774.5 868v2M775 867.5h1M776 866.5h1M777 865.5h1M778 864.5h1M779 863.5h1M780 862.5h1M781 861.5h1M782.5 859v2M783 858.5h1M784 857.5h1M785 856.5h1M786.5 854v2M787 853.5h1M788 852.5h4M792 851.5h4M796 852.5h1M797 853.5h1M798 854.5h1M799 855.5h1M800 856.5h1M801 857.5h1M802 858.5h2M804 859.5h2M806 860.5h2M808 861.5h3M811 862.5h4M815 863.5h2M817 864.5h2M819 865.5h1M820 866.5h1M821 867.5h1M822 868.5h2M823 869.5h1M824.5 870v2M825.5 872v2M826.5 874v2M827.5 876v2M828.5 878v2M829.5 880v3M830 883.5h1M831.5 884v2M832.5 886v2M833.5 888v2M834.5 890v2M835.5 892v2M836 894.5h1M837.5 895v2M838 897.5h1M839.5 898v2M840 900.5h1M841.5 901v2M842 903.5h1M843.5 904v2M844 906.5h1M845.5 907v2M846.5 909v2M847 911.5h1M848.5 912v2M849 914.5h1M850.5 915v2M851 917.5h1M852 918.5h2M854 919.5h2M856 920.5h2M858 921.5h1M859 920.5h3M862 919.5h3M865 918.5h4M869 917.5h4M873 918.5h2M875 919.5h1M876 920.5h2M878 921.5h1M879 922.5h2M881 923.5h2M883 924.5h2M885 925.5h1M886 926.5h8M894 925.5h3M897 924.5h4M901 923.5h7M908 922.5h8M916 921.5h13M929 922.5h2M931 923.5h2M933 924.5h2M935 925.5h2M937 926.5h1M938 927.5h1M939 928.5h1M940 929.5h1M941 930.5h2M943 931.5h1M944.5 932v2M945 934.5h1M946 935.5h1M947 936.5h1M948 937.5h1M949 938.5h2M951 937.5h4M955 936.5h7M962 937.5h2M964 936.5h2M966 935.5h2M968 934.5h2M970 933.5h1M971 934.5h4M975 935.5h4M979 936.5h5M984 937.5h3M987 938.5h3M990 939.5h2M992 940.5h2M994 941.5h2M996 942.5h2M998 943.5h19M1017 942.5h2M1019 941.5h2M1021 940.5h4M1025 939.5h2M1027 938.5h1M1028 937.5h1M1029 936.5h1M1030 935.5h1M1031 934.5h2M1033 933.5h1M1034 932.5h1M1035 931.5h1M1036 930.5h1M1037 929.5h1M1038 928.5h1M1039 927.5h2M1040 926.5h1M1041 925.5h1M1042 924.5h1M1043.5 922v2M1044 921.5h1M1045 920.5h1M1046.5 918v2M1047.5 916v2M1048.5 914v2M1049.5 911v3M1050.5 908v3M1051.5 906v2M1052.5 903v3M1053.5 900v3M1054.5 898v2M1055.5 896v2M1056.5 893v3M1057.5 891v2M1058.5 889v2M1059.5 886v3M1060.5 884v2M1061.5 882v2M1062.5 879v3M1063.5 877v2M1064.5 875v2M1065.5 873v2M1066.5 871v2M1067.5 868v3M1068.5 866v2M1069 865.5h1M1070.5 863v2M1071 862.5h1M1072.5 860v2M1073.5 858v2M1074 857.5h1M1075.5 855v2M1076 854.5h1M1077 853.5h1M1078.5 851v2M1079 850.5h1M1080 849.5h1M1081.5 847v2M1082 846.5h1M1083 845.5h2M1085 844.5h1M1086 843.5h1M1087 842.5h1M1088 841.5h1M1089 840.5h1M1090 839.5h2M1092 838.5h1M1093 837.5h1M1094 836.5h2M1096 835.5h4M1100 834.5h6M1106 835.5h9M1115 834.5h6M1121 835.5h13M1134 834.5h4M1138 833.5h2M1140 832.5h2M1142 831.5h2M1144 830.5h3M1147 829.5h3M1150 828.5h3M1153 829.5h1M1154 830.5h1M1155 831.5h1M1156 832.5h2M1158 833.5h1M1159 834.5h11M1170 833.5h7M1177 834.5h5M1182 835.5h3M1185 836.5h3M1188 837.5h1M1189 838.5h1M1190 839.5h1M1191 840.5h1M1192 841.5h1M1193 842.5h1M1194 843.5h2M1196 844.5h2M1198 845.5h2M1200 846.5h4" fill="none" stroke="#ffff00" stroke-width="1" shape-rendering="crispEdges"/>
<path d="M36 913.5h5M41 914.5h14M55 915.5h4M59 916.5h5M64 917.5h5M69 918.5h6M75 919.5h3M78 920.5h3M81 921.5h3M84 922.5h4M88 923.5h1M89 922.5h5M94 921.5h4M98 920.5h5M103 919.5h4M107 918.5h44M151 919.5h23M174 920.5h11M185 921.5h7M192 922.5h6M198 923.5h4M202 924.5h5M207 925.5h5M212 926.5h4M216 927.5h28M244 928.5h4M248 929.5h3M251 930.5h3M254 931.5h3M257 932.5h6M263 933.5h6M269 934.5h7M276 933.5h9M285 932.5h2M287 931.5h2M289 930.5h2M291 929.5h2M293 928.5h1M294 927.5h1M295 926.5h1M296.5 924v2M297 923.5h1M298 922.5h1M299 921.5h1M300 920.5h1M301 919.5h1M302 918.5h1M303 917.5h1M304 916.5h1M305 915.5h1M306 914.5h1M307 913.5h1M308 912.5h1M309 911.5h1M310 910.5h1M311 909.5h1M312 908.5h1M313 907.5h1M314 906.5h1M315 905.5h1M316 904.5h1M317 903.5h1M318 902.5h1M319 901.5h1M320 900.5h1M321 899.5h1M322 898.5h1M323 897.5h2M325 896.5h1M326 895.5h1M327 894.5h2M329 893.5h1M330 892.5h2M332 891.5h2M334 890.5h1M335 889.5h1M336 888.5h2M338 887.5h1M339 886.5h1M340 885.5h2M342 884.5h1M343 883.5h1M344 882.5h2M346 881.5h1M347 880.5h5M352 879.5h6M358 878.5h4M362 877.5h4M366 876.5h3M369 875.5h3M372 874.5h3M375 873.5h5M380 872.5h4M384 871.5h4M388 870.5h3M391 869.5h4M395 868.5h4M399 867.5h5M404 866.5h4M408 865.5h7M415 864.5h7M422 865.5h5M427 866.5h4M431 867.5h3M434 868.5h2M436 869.5h3M439 870.5h2M441 871.5h2M443 872.5h3M446 873.5h3M449 874.5h3M452 875.5h3M455 876.5h4M459 877.5h2M461 878.5h2M463 879.5h3M466 880.5h2M468 881.5h2M470 882.5h2M472 883.5h3M475 884.5h2M477 885.5h2M479 886.5h2M481 887.5h2M483 888.5h3M486 889.5h2M488 890.5h2M490 891.5h1M491 892.5h2M493 893.5h2M495 894.5h2M497 895.5h2M499 896.5h1M500 897.5h3M503 898.5h4M507 899.5h5M512 900.5h4M516 901.5h4M520 902.5h4M524 903.5h4M528 904.5h3M531 903.5h5M536 902.5h3M539 901.5h3M542 900.5h3M545 899.5h5M550 898.5h29M579 899.5h9M588 900.5h5M593 901.5h5M598 902.5h7M605 903.5h6M611 904.5h12M623 903.5h10M633 902.5h5M638 901.5h5M643 900.5h5M648 899.5h4M652 898.5h4M655 897.5h1M656 898.5h7M663 899.5h7M670 900.5h9M679 901.5h8M687 902.5h8M695 903.5h4M699 904.5h3M702 905.5h2M704 906.5h3M707 907.5h3M710 908.5h2M712 909.5h2M714 910.5h1M715 911.5h2M717 912.5h1M718 913.5h7M725 914.5h8M732 915.5h1M733 914.5h16M749 913.5h5M754 912.5h2M756 911.5h2M758 910.5h2M760 909.5h1M761 908.5h1M762 907.5h1M763 906.5h1M764 905.5h1M765 904.5h1M766 903.5h1M767 902.5h2M769 901.5h2M771 900.5h3M774 899.5h1M775 898.5h2M777 897.5h1M778 896.5h1M779 895.5h1M780 894.5h2M782 893.5h1M783 892.5h1M784 891.5h2M786 890.5h1M787 889.5h1M788 888.5h3M791 887.5h3M794 886.5h7M801 885.5h23M824 886.5h3M827 887.5h1M828 888.5h1M829 889.5h1M830 890.5h2M832 891.5h1M833 892.5h1M834 893.5h1M835 894.5h2M837 895.5h1M838 896.5h2M840 897.5h1M841 898.5h2M843 899.5h2M845 900.5h2M847 901.5h1M848 902.5h2M850 903.5h3M853 904.5h4M857 905.5h5M862 906.5h5M867 907.5h3M870 908.5h4M874 909.5h4M878 910.5h3M881 911.5h4M885 912.5h3M888 913.5h4M892 914.5h5M897 913.5h7M904 914.5h19M923 915.5h3M926 916.5h2M928 917.5h3M931 918.5h3M934 919.5h2M936 920.5h2M938 921.5h1M939 922.5h2M941 923.5h2M943 924.5h2M945 925.5h1M946 926.5h2M948 927.5h2M950 928.5h2M952 929.5h2M954 930.5h2M956 931.5h6M962 932.5h7M969 933.5h4M973 934.5h4M977 935.5h4M981 936.5h3M984 937.5h4M988 938.5h4M992 939.5h4M996 940.5h4M1000 941.5h2M1002 942.5h21M1023 941.5h5M1028 940.5h6M1034 939.5h4M1038 938.5h3M1041 937.5h4M1045 936.5h3M1048 935.5h1M1049 934.5h2M1051 933.5h1M1052 932.5h1M1053 931.5h2M1055 930.5h1M1056 929.5h1M1057 928.5h2M1059 927.5h1M1060 926.5h2M1062 925.5h1M1063 924.5h2M1065 923.5h2M1067 922.5h1M1068 921.5h2M1070 920.5h2M1072 919.5h1M1073 918.5h2M1075 917.5h2M1077 916.5h2M1079 915.5h1M1080 914.5h2M1082 913.5h2M1084 912.5h1M1085 911.5h2M1087 910.5h2M1089 909.5h1M1090 908.5h1M1091 907.5h1M1092 906.5h2M1094 905.5h1M1095 904.5h1M1096 903.5h1M1097 902.5h1M1098 901.5h1M1099 900.5h1M1100 899.5h1M1101 898.5h2M1103 897.5h1M1104 896.5h1M1105 895.5h1M1106 894.5h1M1107 893.5h1M1108 892.5h1M1109 891.5h2M1111 890.5h1M1112 889.5h1M1113 888.5h1M1114 887.5h1M1115 886.5h1M1116 885.5h1M1117 884.5h2M1119 883.5h2M1121 882.5h3M1124 881.5h2M1126 880.5h2M1128 879.5h2M1130 878.5h2M1132 877.5h2M1134 876.5h2M1136 875.5h1M1137 874.5h2M1139 873.5h2M1141 872.5h2M1143 871.5h2M1145 870.5h2M1147 869.5h2M1149 868.5h2M1151 867.5h3M1154 868.5h4M1158 869.5h2M1160 868.5h3M1163 867.5h2M1165 866.5h3M1168 865.5h3M1171 864.5h11M1182 865.5h7M1189 866.5h4M1193 867.5h5M1198 868.5h6" fill="none" stroke="#0000ff" stroke-width="1" shape-rendering="crispEdges"/>
<polyline points="25.4,913.1 46.5,913.1 60.6,914.4 74.2,916 88.3,917.9 102.2,918.7 109.4,918.3 123.5,917.7 137.4,917.7 151.5,918.3 165.5,918.9 179.6,919.3 193.5,920.8 207.6,923.1 220,924.1 242.4,925.5 256.6,928 270.5,929.5 284.4,930.9 293.5,930.9 305.5,927 312.5,924.1 319.4,919.3 326.6,914.4 333.5,910 340.5,905.3 347.5,900.3 354.4,896.1 361.6,892.8 368.5,888.9 375.5,886 382.5,883.5 389.4,880.6 396.4,878.3 403.6,875.2 410.5,872.8 420,870.5 435.5,869 445.5,870.5 459.5,872.8 473.6,876.7 487.5,880.6 501.4,887.4 515.6,892.2 529.5,895.7 536.4,897 550.6,897.6 571.5,897.6 585.6,898 599.5,899.5 613.6,900.9 620,901.5 641.5,901.9 655.6,900.9 676.5,900.3 690.6,900.9 704.5,902.2 718.5,905.7 732.6,908.6 746.5,910.6 760.6,911.1 767.6,909.6 774.5,906.7 781.5,903.8 788.5,900.9 795.6,898 802.6,895.7 809.6,893.2 820,890.8 827.7,890.3 837.4,892.2 851.5,895.7 865.5,899.5 879.6,903.4 893.5,906.7 907.4,909.2 921.5,911.5 935.5,913.5 949.6,917.3 963.5,923.1 977.4,926.6 991.6,930.9 1004,934.3 1012.4,936.4 1026.4,938.4 1040.4,938.4 1054.4,936.8 1061.4,934.3 1075.4,929.2 1089.4,923 1103.4,915.8 1117.4,906.5 1131.4,897.3 1145.4,888 1152.4,883.9 1166.3,877.7 1180.3,873.6 1194.3,870.1 1204,869.5" fill="none" stroke="#ffffff" stroke-width="2" stroke-linejoin="round" shape-rendering="crispEdges"/>
<path d="M25.5 817v11M26.5 828v21M27.5 849v21M28.5 870v21M29.5 891v21M30.5 912v22M31.5 934v21M32.5 955v11M33 965.5h7M39.5 955v10M40.5 934v21M41.5 912v22M42.5 891v21M43.5 870v21M44.5 849v21M45.5 828v21M46.5 817v11M47.5 828v21M48.5 849v21M49.5 870v21M50.5 891v21M51.5 912v22M52.5 934v21M53.5 955v11M54 965.5h49M102.5 955v10M103.5 934v21M104.5 912v22M105.5 891v21M106.5 870v21M107.5 849v21M108.5 828v21M109.5 817v11M110.5 828v21M111.5 849v21M112.5 870v21M113.5 891v21M114.5 912v22M115.5 934v21M116.5 955v11M117 965.5h168M284.5 955v10M285.5 934v21M286.5 912v22M287.5 891v21M288.5 870v21M289.5 849v21M290.5 828v21M291.5 817v11M292.5 828v21M293.5 849v21M294.5 870v21M295.5 891v21M296.5 912v22M297.5 934v21M298.5 955v11M299 965.5h455M753.5 955v10M754.5 934v21M755.5 912v22M756.5 891v21M757.5 870v21M758.5 849v21M759.5 828v21M760.5 817v11M761.5 828v21M762.5 849v21M763.5 870v21M764.5 891v21M765.5 912v22M766.5 934v21M767.5 955v11M768 965.5h273M1040.5 955v10M1041.5 934v21M1042.5 912v22M1043.5 891v21M1044.5 870v21M1045.5 849v21M1046.5 828v21M1047.5 817v11M1048.5 828v21M1049.5 849v21M1050.5 870v21M1051.5 891v21M1052.5 912v22M1053.5 934v21M1054.5 955v11M1055 965.5h149" fill="none" stroke="#ffff00" stroke-width="1" shape-rendering="crispEdges"/>
<text x="879" y="826" fill="#e03c3c" font-size="16" >红柱买入信号</text>
<path d="M956 835 L990 865.5 L994.2 862 L999 879.8 L981.3 873 L985.8 869.5 Z" fill="#fff"/>
<g font-size="12">
<text x="21.5" y="82.5" fill="#d2d2d2" font-size="12" >日线</text>
<text x="52.5" y="82.5" fill="#d2d2d2" font-size="12" >齐星铁塔</text>
<text x="104.5" y="82.5" fill="#fff" font-size="12" >最佳买卖点主图</text>
<text x="193" y="82.5" fill="#fff" font-size="12" letter-spacing="0.05">均5: 25.13</text>
<path d="M254 72h2v6h2v1h-1v2h-1v2h-2v-2h-1v-2h-1v-1h2z" fill="#54ffff" shape-rendering="crispEdges"/>
<text x="266" y="82.5" fill="#ffff00" font-size="12" letter-spacing="0.05">均10: 25.38</text>
<path d="M334 72h2v6h2v1h-1v2h-1v2h-2v-2h-1v-2h-1v-1h2z" fill="#54ffff" shape-rendering="crispEdges"/>
<text x="346" y="82.5" fill="#00ff00" font-size="12" letter-spacing="0.05">均30: 25.51</text>
<path d="M414 72h2v6h2v1h-1v2h-1v2h-2v-2h-1v-2h-1v-1h2z" fill="#54ffff" shape-rendering="crispEdges"/>
<text x="426" y="82.5" fill="#4646ff" font-size="12" letter-spacing="0.05">均60: 25.51</text>
<path d="M494 72h2v6h2v1h-1v2h-1v2h-2v-2h-1v-2h-1v-1h2z" fill="#54ffff" shape-rendering="crispEdges"/>
<text x="506" y="82.5" fill="#ffff00" font-size="12" letter-spacing="0.05">均120: 26.14</text>
<path d="M581 72h2v6h2v1h-1v2h-1v2h-2v-2h-1v-2h-1v-1h2z" fill="#54ffff" shape-rendering="crispEdges"/>
<text x="593" y="82.5" fill="#c03232" font-size="12" letter-spacing="0.05">均240: 25.47</text>
<path d="M668 72h2v2h1v2h1v1h-2v6h-2v-6h-2v-1h1v-2h1z" fill="#ff3232" shape-rendering="crispEdges"/>
<text x="21" y="631.4" fill="#ff3232" font-size="12" >总手: 21863</text>
<path d="M91 621h2v6h2v1h-1v2h-1v2h-2v-2h-1v-2h-1v-1h2z" fill="#54ffff" shape-rendering="crispEdges"/>
<text x="103" y="631.4" fill="#ffff00" font-size="12" >MAVOL5: 58724</text>
<path d="M195 621h2v6h2v1h-1v2h-1v2h-2v-2h-1v-2h-1v-1h2z" fill="#54ffff" shape-rendering="crispEdges"/>
<text x="207" y="631.4" fill="#fff" font-size="12" >MAVOL10: 52461</text>
<path d="M306 621h2v6h2v1h-1v2h-1v2h-2v-2h-1v-2h-1v-1h2z" fill="#54ffff" shape-rendering="crispEdges"/>
<text x="21" y="782.7" fill="#ff00ff" font-size="12" >底部发现牛股</text>
<text x="97" y="782.7" fill="#ff00ff" font-size="12" letter-spacing="0.1">红杏: +31.76</text>
<path d="M170 772h2v6h2v1h-1v2h-1v2h-2v-2h-1v-2h-1v-1h2z" fill="#54ffff" shape-rendering="crispEdges"/>
<text x="182" y="782.7" fill="#ffff00" font-size="12" letter-spacing="0.1">庄家线: +32.82</text>
<path d="M267 772h2v6h2v1h-1v2h-1v2h-2v-2h-1v-2h-1v-1h2z" fill="#54ffff" shape-rendering="crispEdges"/>
<text x="278" y="782.7" fill="#808080" font-size="12" letter-spacing="0.1">造楼筑底: +0</text>
<path d="M352 772h2v6h2v1h-1v2h-1v2h-2v-2h-1v-2h-1v-1h2z" fill="#54ffff" shape-rendering="crispEdges"/>
<text x="363.5" y="782.7" fill="#0000ff" font-size="12" letter-spacing="0.1">附属轨道: +31.24</text>
<path d="M461 772h2v6h2v1h-1v2h-1v2h-2v-2h-1v-2h-1v-1h2z" fill="#54ffff" shape-rendering="crispEdges"/>
<text x="472" y="782.7" fill="#fff" font-size="12" letter-spacing="0.1">白金轨道: +33.49</text>
<path d="M570 772h2v6h2v1h-1v2h-1v2h-2v-2h-1v-2h-1v-1h2z" fill="#54ffff" shape-rendering="crispEdges"/>
<text x="582" y="782.7" fill="#ffff00" font-size="12" letter-spacing="0.1">买点分析: +0</text>
<path d="M656 772h2v6h2v1h-1v2h-1v2h-2v-2h-1v-2h-1v-1h2z" fill="#54ffff" shape-rendering="crispEdges"/>
</g>
<rect x="1177.5" y="70.5" width="30" height="17" fill="#000" stroke="#800000"/>
<text x="1180" y="84" fill="#d2d2d2" font-size="12" >加自</text>
<rect x="21.5" y="108.5" width="62" height="377" fill="#000" stroke="#800000" shape-rendering="crispEdges"/>
<rect x="71.5" y="108.5" width="12" height="12" fill="#000" stroke="#800000" shape-rendering="crispEdges"/>
<path d="M73.5 110.5l8 8m0-8l-8 8" stroke="#d2d2d2" fill="none"/>
<g text-anchor="middle" font-size="16" fill="#c0c0c0">
<text x="52.5" y="128.2">时间</text>
<text x="52.5" y="172.2">数值</text>
<text x="52.5" y="205.2">开盘</text>
<text x="52.5" y="238.2">最高</text>
<text x="52.5" y="270.2">最低</text>
<text x="52.5" y="303.2">收盘</text>
<text x="52.5" y="336.2">涨幅</text>
<text x="52.5" y="368.2">振幅</text>
<text x="52.5" y="401.2">总手</text>
<text x="52.5" y="434.2">金额</text>
<text x="52.5" y="466.2">换手</text>
</g>
<g text-anchor="middle" font-size="13.8" font-weight="bold" letter-spacing=".25">
<text x="53.3" y="143" fill="#c8c8c8">2016</text>
<text x="53.3" y="154.7" fill="#c8c8c8">0803</text>
<text x="53.3" y="188.2" fill="#ff3232">41.12</text>
<text x="53.3" y="221" fill="#ff3232">24.65</text>
<text x="53.3" y="253" fill="#ff3232">24.80</text>
<text x="53.3" y="286" fill="#00ff00">24.50</text>
<text x="53.3" y="319" fill="#ff3232">24.66</text>
<text x="53.3" y="351" fill="#ff3232">+0.24%</text>
<text x="53.3" y="384.3" fill="#00ffff">1.22%</text>
<text x="53.3" y="416.3" fill="#00ffff">21863</text>
<text x="53.3" y="449.5" fill="#00ffff">5386万</text>
<text x="53.3" y="482" fill="#00ffff">0.57%</text>
</g>
<g>
<defs><linearGradient id="wm" x1="0" y1="0" x2="0" y2="1"><stop offset="0" stop-color="#ff5546"/><stop offset="1" stop-color="#fa4614"/></linearGradient></defs>
<rect x="1086" y="938" width="36" height="37" rx="8" fill="url(#wm)"/>
<circle cx="1104" cy="956.5" r="14" fill="none" stroke="#fff" stroke-width="2"/>
<path d="M1092 962.5h24a13 13 0 0 1-24 0z" fill="#fff" opacity=".35"/>
<text x="1104" y="962" text-anchor="middle" font-size="15" font-weight="900" fill="#fff">财</text>
<text x="1124" y="961.7" font-size="26.5" font-weight="900" fill="#fa551e" textLength="73" lengthAdjust="spacingAndGlyphs">财富<tspan fill="#32a0dc">池</tspan></text>
<text x="1125.5" y="974" font-size="10.5" font-weight="bold" fill="#787878" style="font-family:'Liberation Serif',serif" textLength="71.5" lengthAdjust="spacingAndGlyphs">www.cfchi.com</text>
</g>
<text x="22.5" y="979" fill="#ff3232" font-size="12" >07</text>
<text x="96.5" y="979" fill="#ff3232" font-size="12" >08</text>
<text x="215.5" y="979" fill="#ff3232" font-size="12" >09</text>
<text x="348.5" y="979" fill="#ff3232" font-size="12" >10</text>
<text x="461" y="979" fill="#ff3232" font-size="12" >11</text>
<text x="615" y="979" fill="#ff3232" font-size="12" >12</text>
<text x="769" y="979" fill="#ff3232" font-size="12" >01</text>
<text x="895" y="979" fill="#ff3232" font-size="12" >02</text>
<text x="1020.7" y="979" fill="#ff3232" font-size="12" >03</text>
<text x="1182" y="979" fill="#ff3232" font-size="12" >04</text>
<g shape-rendering="crispEdges" fill="#800000">
<rect x="22" y="966" width="1" height="4"/>
<rect x="95" y="966" width="1" height="4"/>
<rect x="215" y="966" width="1" height="4"/>
<rect x="347" y="966" width="1" height="4"/>
<rect x="459" y="966" width="1" height="4"/>
<rect x="613" y="966" width="1" height="4"/>
<rect x="767" y="966" width="1" height="4"/>
<rect x="893" y="966" width="1" height="4"/>
<rect x="1019" y="966" width="1" height="4"/>
<rect x="1181" y="966" width="1" height="4"/>
</g>
</svg>
<div id="side">
<div class="rb"></div>
<div class="tab tl" style="top:1px;height:48px;padding-top:12.7px;line-height:13.40px">首页</div>
<div class="tab tl" style="top:51px;height:50px;padding-top:16.2px;line-height:15.30px"><i class="ap"></i>应用</div>
<div class="tab td" style="top:103px;height:53px;padding-top:6.9px;line-height:15.25px">分时图</div>
<div class="tab ta" style="top:157px;height:53px;padding-top:6.7px;line-height:14.20px"><b>K</b>线图</div>
<div class="tab td" style="top:211px;height:68px;padding-top:6.4px;line-height:14.60px">个股资料</div>
<div class="tab td" style="top:280px;height:53px;padding-top:7.8px;line-height:14.45px">自选股</div>
<div class="tab td" style="top:334px;height:68px;padding-top:6.9px;line-height:14.07px">综合排名</div>
<div class="tab td" style="top:403px;height:68px;padding-top:7.7px;line-height:13.90px">牛叉诊股</div>
<div class="tab td" style="top:472px;height:68px;padding-top:7.9px;line-height:13.87px">超级盘口</div>
</div>

<div id="menu">
<span class="hl"></span>
<span style="left:6px">系统</span><span style="left:46px">报价</span><span style="left:86px">分析</span><span style="left:126px">扩展行情</span><span style="left:189px">委托</span><span style="left:229px">智能</span><span style="left:269px">工具</span><span style="left:309px">资讯</span><span style="left:349px">帮助</span>
<span class="logo">同花顺</span>
<span style="left:942px;top:4.6px;color:#464646;white-space:pre">-  A股技术分析</span>
</div>
<div id="tb">
<div class="grip" style="left:2px"></div>
<div class="b" style="left:9px;top:4px;width:38px;height:40px"><svg width="37" height="39" viewBox="0 0 37 39"><rect x="9" y="9" width="21" height="21" fill="#5a5a5a"/><rect x="10" y="10" width="9" height="9" fill="#f05050"/><rect x="20" y="10" width="9" height="9" fill="#f5cd50"/><rect x="10" y="20" width="9" height="9" fill="#64b95a"/><rect x="20" y="20" width="9" height="9" fill="#64a0dc"/></svg></div>
<div class="b" style="left:55px;top:4px;width:38px;height:40px"><svg width="37" height="39" viewBox="0 0 37 39"><defs><linearGradient id="ga" x1="0" y1="0" x2="0" y2="1"><stop offset="0" stop-color="#fff2b4"/><stop offset="1" stop-color="#fab432"/></linearGradient></defs><path d="M8 18.5L18.5 8.5V13.5H28.5V23.5H18.5V28.5Z" fill="url(#ga)" stroke="#e08c1e" stroke-width="1" stroke-linejoin="round"/></svg></div>
<div class="b" style="left:99px;top:3px;width:26px;height:19px"><svg width="25" height="18" viewBox="0 0 25 18"><defs><linearGradient id="gb" x1="0" y1="0" x2="0" y2="1"><stop offset="0" stop-color="#fff2b4"/><stop offset="1" stop-color="#fab432"/></linearGradient></defs><path d="M12.5 2.5L19 9H15.5V15H9.5V9H6Z" fill="url(#gb)" stroke="#e08c1e" stroke-width="1" stroke-linejoin="round"/></svg></div>
<div class="b" style="left:99px;top:25px;width:26px;height:19px"><svg width="25" height="18" viewBox="0 0 25 18"><defs><linearGradient id="gc" x1="0" y1="0" x2="0" y2="1"><stop offset="0" stop-color="#fff2b4"/><stop offset="1" stop-color="#fab432"/></linearGradient></defs><path d="M12.5 16.5L19 10H15.5V4H9.5V10H6Z" fill="url(#gc)" stroke="#e08c1e" stroke-width="1" stroke-linejoin="round"/></svg></div>
<div class="b" style="left:131px;top:4px;width:26px;height:25px"><svg width="26" height="24" viewBox="0 0 26 24"><defs><linearGradient id="gd" x1="0" y1="0" x2="0" y2="1"><stop offset="0" stop-color="#fff5c8"/><stop offset=".55" stop-color="#ffd75a"/><stop offset="1" stop-color="#f5aa1e"/></linearGradient></defs><path d="M20.200 4.800A9.500 9.500 0 1 1 4.600 8.250L3.500 4L14.500 2L12.500 11L9.700 10.100A4 4 0 1 0 16.300 8.700Z" fill="url(#gd)" stroke="#d79619" stroke-width="1" stroke-linejoin="round"/></svg></div><div class="l" style="left:125px;width:38px;">修正</div>
<div class="b" style="left:163px;top:4px;width:26px;height:25px"><svg width="26" height="24" viewBox="0 0 26 24"><defs><linearGradient id="gk" x1="0" y1="0" x2="0" y2="1"><stop offset="0" stop-color="#f0aa14"/><stop offset=".5" stop-color="#c86e0a"/><stop offset="1" stop-color="#781400"/></linearGradient></defs><ellipse cx="13.100" cy="19.600" rx="6.500" ry="1.300" fill="#8c1e00" opacity=".7"/><circle cx="13.100" cy="11.400" r="8.500" fill="url(#gk)"/><circle cx="13.100" cy="11.400" r="6.300" fill="#fff"/><g fill="#5a3c00"><circle cx="13.100" cy="6.300" r=".7"/><circle cx="13.100" cy="16.500" r=".7"/><circle cx="8" cy="11.400" r=".7"/><circle cx="18.200" cy="11.400" r=".7"/></g><g fill="#e6b43c"><circle cx="15.650" cy="7" r=".5"/><circle cx="17.500" cy="8.850" r=".5"/><circle cx="17.500" cy="13.950" r=".5"/><circle cx="15.650" cy="15.800" r=".5"/><circle cx="10.550" cy="15.800" r=".5"/><circle cx="8.700" cy="13.950" r=".5"/><circle cx="8.700" cy="8.850" r=".5"/><circle cx="10.550" cy="7" r=".5"/></g><path d="M13.100 7.500V11.400" stroke="#141414" stroke-width="1.300" fill="none"/><path d="M13.100 11.400L17.200 13.800" stroke="#c88c14" stroke-width="1.100" fill="none"/><path d="M13.100 11.400L15.300 12.700" stroke="#141414" stroke-width="1.300" fill="none"/></svg></div><div class="l" style="left:157px;width:38px;">测速</div>
<div class="sep" style="left:191px"></div><div class="grip" style="left:194px"></div>
<div class="b" style="left:200px;top:4px;width:26px;height:25px"><div class="ch" style="color:#f00;font-size:14.5px;line-height:25px;font-weight:bold">买</div></div><div class="l" style="left:194px;width:38px;">买入</div>
<div class="b" style="left:232px;top:4px;width:26px;height:25px"><div class="ch" style="color:#008000;font-size:14.5px;line-height:25px;font-weight:bold">卖</div></div><div class="l" style="left:226px;width:38px;">卖出</div>
<div class="b" style="left:264px;top:4px;width:26px;height:25px"><svg width="26" height="24" viewBox="0 0 26 24"><defs><linearGradient id="gg" x1="0" y1="0" x2="1" y2="1"><stop offset="0" stop-color="#b4500f"/><stop offset=".4" stop-color="#f0aa6e"/><stop offset="1" stop-color="#a03c05"/></linearGradient></defs><path d="M12 11.400L22.300 19.800" stroke="#96460a" stroke-width="3.400" stroke-linecap="round"/><path d="M12 11L21.800 19" stroke="#d28246" stroke-width="1.400" stroke-linecap="round"/><path d="M11.500 10.500L14.500 13" stroke="#f5d2a0" stroke-width="2" stroke-linecap="butt"/><path d="M3 10.200Q2.200 8.700 3.600 7.500L10.800 2Q12.300 1.200 13.500 2.600L16.700 6.600Q17.500 8 16.300 9.200L9 14.800Q7.500 15.700 6.300 14.400Z" fill="url(#gg)" stroke="#aa500f" stroke-width=".8"/><path d="M5.200 8.300L8.600 12.800M11.500 3.500L15 8" stroke="#8c3c05" stroke-width="1"/><rect x="3" y="20.200" width="9" height="1.700" rx=".5" fill="#aa320a"/></svg></div><div class="l" style="left:258px;width:38px;">模拟</div>
<div class="b" style="left:295px;top:4px;width:26px;height:25px"><svg width="26" height="24" viewBox="0 0 26 24"><path d="M8 10V7.500A5.300 5.300 0 0 1 18.600 7.500V8.200" fill="none" stroke="#788296" stroke-width="3.200"/><path d="M8 10V7.500A5.300 5.300 0 0 1 18.600 7.500V8.200" fill="none" stroke="#c3cdd7" stroke-width="1.400"/><rect x="4.500" y="9.800" width="17" height="11.700" rx="2" fill="#ebaa5a" stroke="#824b14"/><path d="M5.500 12.500h15M5.500 14.800h15M5.500 17.100h15M5.500 19.400h15" stroke="#c88737" stroke-width=".8"/><path d="M13 14v4.500" stroke="#321900" stroke-width="1.800"/><rect x="11.300" y="13.200" width="3.400" height="1.800" fill="#321900"/></svg></div><div class="l" style="left:289px;width:38px;">开户</div>
<div class="sep" style="left:322px"></div><div class="grip" style="left:325px"></div>
<div class="b" style="left:332px;top:4px;width:38px;height:25px"><svg width="25" height="24" viewBox="0 0 25 24"><defs><linearGradient id="gf" x1="0" y1="0" x2="0" y2="1"><stop offset="0" stop-color="#aad2fa"/><stop offset="1" stop-color="#5091e1"/></linearGradient></defs><path d="M3.500 5Q3.500 3.500 5 3.500H10Q11.500 3.500 11.500 5V7H3.500Z" fill="#f0f8ff" stroke="#3273c3"/><rect x="3.500" y="6.500" width="19.500" height="14" rx="1.500" fill="url(#gf)" stroke="#2d69be"/><path d="M13.200 9l1.400 3 3.300.400-2.400 2.300.600 3.300-2.900-1.600-2.900 1.600.600-3.300-2.400-2.300 3.300-.400z" fill="#285aa5"/></svg><div class="dv" style="left:24px"></div><div class="ar" style="left:26.300px"></div></div><div class="l" style="left:326px;width:50px;">自选股</div>
<div class="b" style="left:376px;top:4px;width:38px;height:25px"><svg width="25" height="24" viewBox="0 0 25 24"><defs><linearGradient id="gp" x1="0" y1="0" x2="0" y2="1"><stop offset="0" stop-color="#8cbef5"/><stop offset="1" stop-color="#3c82d7"/></linearGradient></defs><circle cx="14.900" cy="12" r="8.500" fill="url(#gp)"/><circle cx="14.900" cy="12" r="7" fill="#fcfdff"/><path d="M14.900 6.200v1.300M14.900 16.500v1.300M9.100 12h1.300M19.400 12h1.300" stroke="#aab4c3" stroke-width="1"/><path d="M14.900 6.500V12.500L17.800 14.800" stroke="#1e55aa" stroke-width="1.400" fill="none"/><path d="M5.500 3V20" stroke="#1e50be" stroke-width="1.200"/><rect x="3.500" y="5.500" width="4" height="9.500" fill="#a0d7ff" stroke="#1e50be"/></svg><div class="dv" style="left:24px"></div><div class="ar" style="left:26.300px"></div></div><div class="l" style="left:370px;width:50px;">周期</div>
<div class="b" style="left:419px;top:4px;width:38px;height:25px"><svg width="25" height="24" viewBox="0 0 25 24"><rect x="3.500" y="4.500" width="18" height="15" rx="1" fill="#f0f5ff" stroke="#3264b4"/><rect x="4" y="5" width="17" height="2.500" fill="#6e96dc"/><rect x="5" y="9" width="8" height="9" fill="#3c82e6"/><path d="M5 9l4 3 4-3" fill="#a0d2ff"/><path d="M14.500 9.500h5.500M14.500 12h5.500M14.500 14.500h5.500M14.500 17h5.500" stroke="#5078c8" stroke-width="1"/></svg><div class="dv" style="left:24px"></div><div class="ar" style="left:26.300px"></div></div><div class="l" style="font-family:'Liberation Serif',serif;letter-spacing:.2px;left:413px;width:50px;">F10/F9</div>
<div class="b" style="left:465px;top:4px;width:38px;height:25px"><svg width="25" height="24" viewBox="0 0 25 24"><path d="M5.500 20.700h9.500" stroke="#1e8cdc" stroke-width="1.600"/><path d="M3.800 20.500L5.200 15.200L16.800 3.800L20.800 7.800L9.200 19.200Z" fill="#a5cdf5" stroke="#4173be" stroke-width="1"/><path d="M7.500 16.500L18 6" stroke="#e6f2ff" stroke-width="1.600"/><path d="M16.300 4.300L18 2.600L22 6.600L20.300 8.300Z" fill="#e62332" stroke="#b41e28" stroke-width=".5"/><path d="M3.800 20.500L4.700 17.300L7 19.600Z" fill="#1e1e1e"/></svg><div class="dv" style="left:24px"></div><div class="ar" style="left:26.300px"></div></div><div class="l" style="left:459px;width:50px;">画线</div>
<div class="b" style="left:510px;top:4px;width:38px;height:25px"><svg width="25" height="24" viewBox="0 0 25 24"><rect x="3" y="3.500" width="19" height="17.500" rx="2" fill="#f0f0f0" stroke="#6e6e6e"/><rect x="4.500" y="5" width="16" height="14.500" fill="#234b96"/><circle cx="12.500" cy="12.300" r="6.500" fill="#4682d2"/><circle cx="12.500" cy="12.300" r="4.600" fill="none" stroke="#78aae6" stroke-width="1.300"/><circle cx="12.500" cy="12.300" r="1.800" fill="#6ea0e1"/><path d="M12.500 5.500v13.500M5 12.300h15" stroke="#1e4691" stroke-width=".7"/><circle cx="16.200" cy="8.500" r="1.700" fill="#fff"/></svg><div class="dv" style="left:24px"></div><div class="ar" style="left:26.300px"></div></div><div class="l" style="left:504px;width:50px;">选股</div>
<div class="b" style="left:553px;top:4px;width:38px;height:25px"><div class="ch" style="color:#1e55c3;font-size:19.5px;line-height:25.5px;font-weight:900">论</div></div><div class="l" style="left:547px;width:50px;">论股堂</div>
<div class="b" style="left:597px;top:4px;width:38px;height:25px"><svg width="37" height="24" viewBox="0 0 37 24"><text x="6" y="17" font-size="14" font-weight="bold" fill="#1e46b4" stroke="#1e46b4" stroke-width=".5" font-family="Liberation Sans,sans-serif" textLength="27.500" lengthAdjust="spacingAndGlyphs">NEWS</text></svg></div><div class="l" style="left:591px;width:50px;">资讯</div>
<div class="t" style="left:639px;top:3px;">资金</div>
<div class="t" style="left:639px;top:25px;font-family:'Liberation Serif',serif;font-weight:bold;font-size:12.5px">BBD</div>
<div class="t" style="left:689px;top:3px;">研报</div>
<div class="t" style="left:689px;top:25px;">预测</div>
<div class="b" style="left:746px;top:4px;width:26px;height:25px"><svg width="26" height="24" viewBox="0 0 26 24"><path d="M4.500 18.500H23.500V21H5.500Z" fill="#37649b"/><path d="M4 3.500H20L23.500 7V18.500H4Z" fill="#f5f8ff" stroke="#a5afcd"/><rect x="5.500" y="5" width="12" height="1.700" fill="#a5b9eb"/><path d="M20 3.500V7H23.500Z" fill="#dce6f5" stroke="#a5afcd" stroke-width=".8"/><text x="7" y="16.200" font-size="10.500" font-weight="bold" fill="#465f9b" stroke="#465f9b" stroke-width=".5" font-family="Liberation Sans,sans-serif" textLength="12" lengthAdjust="spacingAndGlyphs">PE</text></svg></div><div class="l" style="left:740px;width:38px;">数据</div>
<div class="b" style="left:783px;top:4px;width:26px;height:25px"><svg width="26" height="24" viewBox="0 0 26 24"><defs><radialGradient id="gh" cx=".5" cy=".8" r=".75"><stop offset="0" stop-color="#fffbe6"/><stop offset=".3" stop-color="#ffd246"/><stop offset=".7" stop-color="#f5461e"/><stop offset="1" stop-color="#e61e14"/></radialGradient></defs><path d="M13.500 1.500C15.500 4.500 18 5.500 18.500 8C19.500 7.500 20.500 7 21.200 7.500C22.200 9 22 12 20.500 13.500C19 15.300 16 15.500 13.500 15.500C11 15.500 8 15.300 6.500 13.500C5 12 4.800 9 5.800 7.500C6.500 7 7.500 7.500 8.500 8C9.500 6.500 12.500 4.500 13.500 1.500Z" fill="url(#gh)"/><ellipse cx="7.800" cy="12.500" rx="1.400" ry="2" fill="#ffe164"/><ellipse cx="19.200" cy="12.500" rx="1.400" ry="2" fill="#ffe164"/><text x="5.500" y="20.200" font-size="4.600" font-weight="bold" fill="#c81420" stroke="#c81420" stroke-width=".5" font-family="Liberation Sans,sans-serif" textLength="16" lengthAdjust="spacingAndGlyphs">HOT</text></svg></div><div class="l" style="left:777px;width:38px;">热点</div>
<div class="b" style="left:817px;top:4px;width:26px;height:25px"><svg width="26" height="24" viewBox="0 0 26 24"><defs><linearGradient id="gi" x1="0" y1="0" x2="1" y2="0"><stop offset="0" stop-color="#5aa0f0"/><stop offset=".5" stop-color="#82bef8"/><stop offset="1" stop-color="#5aa0f0"/></linearGradient></defs><path d="M7 2.500H18L22 6.500V21H7Z" fill="url(#gi)" stroke="#3c82e1"/><path d="M18 2.500V6.500H22Z" fill="#d2e6ff" stroke="#3c82e1" stroke-width=".7"/><text x="9.300" y="16.200" font-size="9.500" font-weight="bold" fill="#fff" font-family="Liberation Sans,sans-serif" textLength="10.500" lengthAdjust="spacingAndGlyphs">IPO</text></svg></div><div class="l" style="left:811px;width:38px;">新股</div>
<div class="sep" style="left:846px"></div><div class="grip" style="left:849px"></div>
<div class="t" style="left:855px;top:3px;">指数</div>
<div class="t" style="left:855px;top:25px;">个股</div>
<div class="t" style="left:904px;top:3px;">全球</div>
<div class="t" style="left:904px;top:25px;">板块</div>
<div class="t" style="left:954px;top:3px;">股指</div>
<div class="t" style="left:954px;top:25px;">期货</div>
<div class="t" style="left:1003px;top:3px;">期权</div>
<div class="t" style="left:1003px;top:25px;">基金</div>
<div class="t" style="left:1053px;top:3px;">港股</div>
<div class="t" style="left:1053px;top:25px;">外汇</div>
<div class="t" style="left:1103px;top:3px;">债券</div>
<div class="t" style="left:1103px;top:25px;">美股</div>
<div class="sep" style="left:1149px"></div><div class="grip" style="left:1152px"></div>
<div class="b" style="left:1160px;top:4px;width:38px;height:25px"><svg width="25" height="24" viewBox="0 0 25 24"><rect x="3.500" y="3.500" width="18" height="17" rx="2.500" fill="#fafafa" stroke="#6e6e6e"/><rect x="5" y="5" width="8" height="7" fill="#aac8fa"/><rect x="6" y="6" width="6" height="5" fill="#bed7f5"/><rect x="14" y="5" width="6" height="6" fill="#2864d2"/><rect x="5" y="13" width="4.500" height="6" fill="#a0beff"/><path d="M20 11V19H12Z" fill="#2864d2"/><path d="M9.200 19.300L10.300 15.300L17 8.300L19.800 11.100L13 18Z" fill="#8cc3f0" stroke="#fff" stroke-width="1.600" stroke-linejoin="round"/><path d="M9.200 19.300L10.300 15.300L17 8.300L19.800 11.100L13 18Z" fill="#82b9eb"/><path d="M11.500 15.800L17.600 9.600" stroke="#dcf0ff" stroke-width="1"/><path d="M16.600 8.700L17.800 7.500Q18.500 7 19.200 7.600L20.500 8.900Q21 9.600 20.500 10.300L19.400 11.500Z" fill="#e6372d"/><path d="M9.200 19.300L10 16.300L12.200 18.400Z" fill="#c89637"/></svg><div class="dv" style="left:24px"></div><div class="ar" style="left:26.300px"></div></div><div class="l" style="left:1154px;width:50px;">自定义</div>
</div>

</body></html>
